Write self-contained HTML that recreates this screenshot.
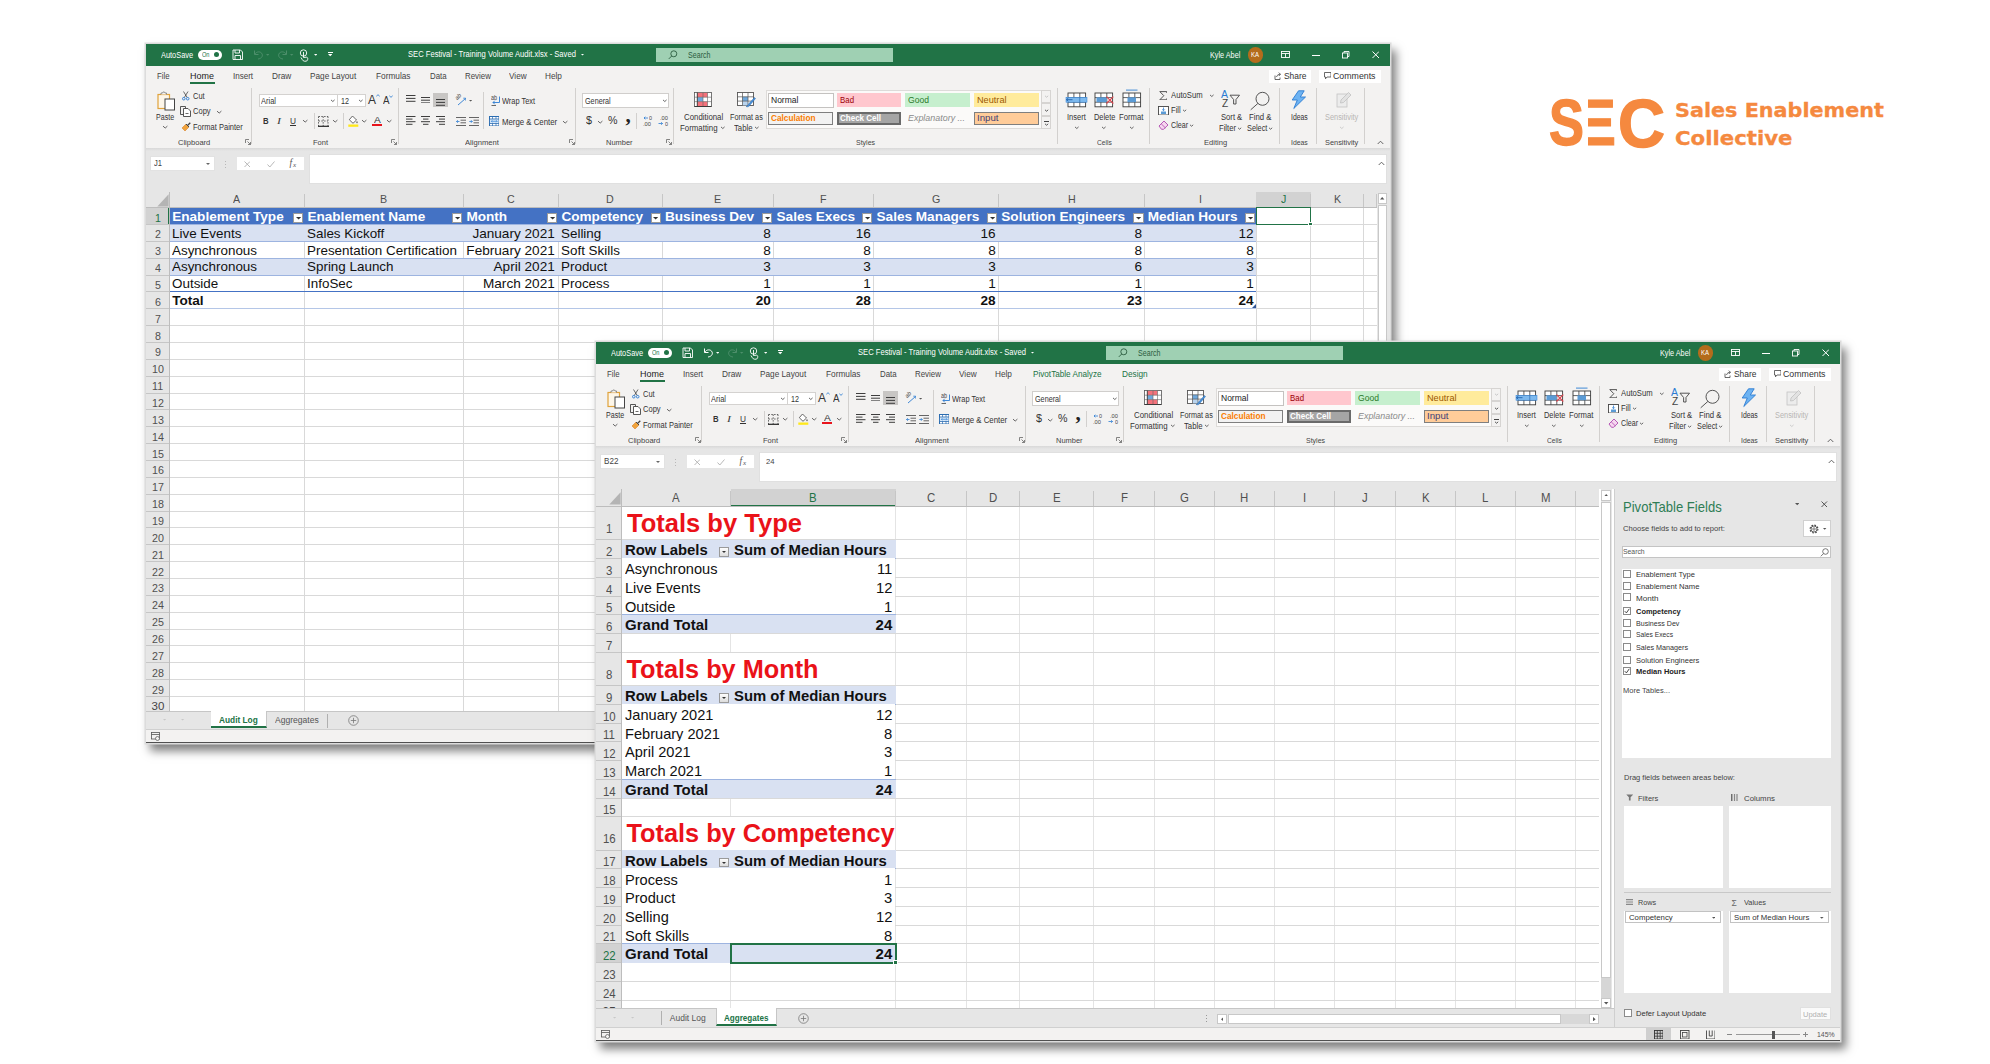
<!DOCTYPE html><html lang="en"><head><meta charset="utf-8"><title>SEC Festival - Training Volume Audit</title><style>
html,body{margin:0;padding:0;background:#fff;}
body{width:1990px;height:1064px;position:relative;overflow:hidden;font-family:"Liberation Sans",sans-serif;}
.a{position:absolute;display:block;}
.t{position:absolute;display:block;white-space:nowrap;transform-origin:0 50%;}
.win{position:absolute;width:1244px;height:699px;background:#e6e6e6;overflow:hidden;box-shadow:0 0 0 1.5px #dcdcdc,5px 7px 9px 1px rgba(0,0,0,0.5);}
</style></head><body>
<div class="win" style="left:146px;top:44px"><div class="a" style="left:0px;top:22px;width:1244px;height:81.5px;background:#f3f2f1;"></div>
<div class="a" style="left:0px;top:103.5px;width:1244px;height:3px;background:linear-gradient(#d8d8d8,#e6e6e6);"></div>
<div class="a" style="left:0px;top:0px;width:1244px;height:22px;background:#217346;"></div>
<span class="t" style="left:14.7px;top:5.5px;font-size:8.5px;line-height:10.2px;color:#fff;transform:scaleX(0.871);">AutoSave</span>
<div class="a" style="left:51.8px;top:5.6px;width:24.7px;height:10.4px;background:#fff;border-radius:5.2px;"></div>
<span class="t" style="left:55.5px;top:6.9px;font-size:6.5px;line-height:7.8px;color:#217346;transform:scaleX(0.865);">On</span>
<div class="a" style="left:68px;top:8.1px;width:5.4px;height:5.4px;background:#217346;border-radius:3px;"></div>
<svg class="a" style="left:85.8px;top:5px;" width="11.5" height="11.5" viewBox="0 0 11.5 11.5"><path d="M1 1H8.5L10.5 3V10.5H1Z M3 1V4H7.5V1 M3 10.5V6.5H8.5V10.5" fill="none" stroke="#fff" stroke-width="0.9"/></svg>
<svg class="a" style="left:106.5px;top:5px;" width="11" height="11" viewBox="0 0 11 11"><path d="M1.5 1.5V5.5H5.5 M1.8 5.2C3.5 2.2 8 2 9.2 5.2C10 8 7.5 9.8 5 10" fill="none" stroke="#4d8f6b" stroke-width="1"/></svg>
<svg class="a" style="left:119.8px;top:9.95px;" width="3.4" height="2.2" viewBox="0 0 3.4 2.2"><path d="M0 0 L3.4 0 L1.7 1.7 Z" fill="#4d8f6b"/></svg>
<svg class="a" style="left:130.5px;top:5px;" width="11" height="11" viewBox="0 0 11 11"><path d="M9.5 1.5V5.5H5.5 M9.2 5.2C7.5 2.2 3 2 1.8 5.2C1 8 3.5 9.8 6 10" fill="none" stroke="#4d8f6b" stroke-width="1"/></svg>
<svg class="a" style="left:144.3px;top:9.95px;" width="3.4" height="2.2" viewBox="0 0 3.4 2.2"><path d="M0 0 L3.4 0 L1.7 1.7 Z" fill="#4d8f6b"/></svg>
<svg class="a" style="left:153px;top:4.5px;" width="10" height="13" viewBox="0 0 10 13"><circle cx="4.5" cy="4" r="3.2" fill="none" stroke="#fff" stroke-width="0.9"/><path d="M4.5 3V8.5L7.5 8.2C9 8.4 9 10 8.3 11.5C7 12.8 4 12.5 3.2 10.5L2 8.5" fill="none" stroke="#fff" stroke-width="0.9"/></svg>
<svg class="a" style="left:167.7px;top:9.95px;" width="3.4" height="2.2" viewBox="0 0 3.4 2.2"><path d="M0 0 L3.4 0 L1.7 1.7 Z" fill="#fff"/></svg>
<div class="a" style="left:181.5px;top:8.2px;width:5px;height:1px;background:#fff;"></div>
<svg class="a" style="left:181.8px;top:9.9px;" width="4.4" height="2.7" viewBox="0 0 4.4 2.7"><path d="M0 0 L4.4 0 L2.2 2.2 Z" fill="#fff"/></svg>
<span class="t" style="left:262.4px;top:5.3px;font-size:8.5px;line-height:10.2px;color:#fff;transform:scaleX(0.895);">SEC Festival - Training Volume Audit.xlsx - Saved</span>
<svg class="a" style="left:435px;top:10.05px;" width="3" height="2" viewBox="0 0 3 2"><path d="M0 0 L3 0 L1.5 1.5 Z" fill="#fff"/></svg>
<div class="a" style="left:510.2px;top:3.9px;width:236.6px;height:14.4px;background:#9fd0b3;"></div>
<svg class="a" style="left:522px;top:6.2px;" width="9.5" height="9.5" viewBox="0 0 9.5 9.5"><circle cx="5.8" cy="3.8" r="3" fill="none" stroke="#2b5c40" stroke-width="0.9"/><path d="M3.7 6L0.8 8.9" stroke="#2b5c40" stroke-width="0.9"/></svg>
<span class="t" style="left:541.8px;top:6.1px;font-size:8.5px;line-height:10.2px;color:#2b5c40;transform:scaleX(0.835);">Search</span>
<span class="t" style="left:1063.7px;top:5.9px;font-size:8.5px;line-height:10.2px;color:#fff;transform:scaleX(0.855);">Kyle Abel</span>
<div class="a" style="left:1101.6px;top:3.3px;width:15.4px;height:15.4px;background:#b46c1c;border-radius:8px;"></div>
<span class="t" style="left:1105.3px;top:7.3px;font-size:6.5px;line-height:7.8px;color:#fff;transform:scaleX(0.923);">KA</span>
<svg class="a" style="left:1134.8px;top:7.3px;" width="9" height="7.5" viewBox="0 0 9 7.5"><rect x="0.5" y="0.5" width="8" height="6" fill="none" stroke="#fff" stroke-width="0.9"/><path d="M0.5 2.5H8.5M4.5 2.5V6.5" stroke="#fff" stroke-width="0.9"/></svg>
<div class="a" style="left:1165.5px;top:10.5px;width:8px;height:1px;background:#fff;"></div>
<svg class="a" style="left:1196px;top:7px;" width="8" height="8" viewBox="0 0 8 8"><rect x="0.5" y="2" width="5" height="5" fill="none" stroke="#fff" stroke-width="0.9"/><path d="M2 2V0.5H7V5.5H5.5" fill="none" stroke="#fff" stroke-width="0.9"/></svg>
<svg class="a" style="left:1225.5px;top:7.2px;" width="7.5" height="7.5" viewBox="0 0 7.5 7.5"><path d="M0.5 0.5L7 7M7 0.5L0.5 7" stroke="#fff" stroke-width="1"/></svg>
<span class="t" style="left:10.9px;top:26.3px;font-size:9.5px;line-height:11.4px;color:#444;transform:scaleX(0.817);">File</span>
<span class="t" style="left:44.3px;top:26.3px;font-size:9.5px;line-height:11.4px;color:#222;transform:scaleX(0.943);">Home</span>
<span class="t" style="left:86.5px;top:26.3px;font-size:9.5px;line-height:11.4px;color:#444;transform:scaleX(0.846);">Insert</span>
<span class="t" style="left:125.5px;top:26.3px;font-size:9.5px;line-height:11.4px;color:#444;transform:scaleX(0.871);">Draw</span>
<span class="t" style="left:164.4px;top:26.3px;font-size:9.5px;line-height:11.4px;color:#444;transform:scaleX(0.866);">Page Layout</span>
<span class="t" style="left:229.7px;top:26.3px;font-size:9.5px;line-height:11.4px;color:#444;transform:scaleX(0.871);">Formulas</span>
<span class="t" style="left:283.5px;top:26.3px;font-size:9.5px;line-height:11.4px;color:#444;transform:scaleX(0.827);">Data</span>
<span class="t" style="left:319.4px;top:26.3px;font-size:9.5px;line-height:11.4px;color:#444;transform:scaleX(0.831);">Review</span>
<span class="t" style="left:363.4px;top:26.3px;font-size:9.5px;line-height:11.4px;color:#444;transform:scaleX(0.862);">View</span>
<span class="t" style="left:399.3px;top:26.3px;font-size:9.5px;line-height:11.4px;color:#444;transform:scaleX(0.865);">Help</span>
<div class="a" style="left:44.2px;top:37.9px;width:24.8px;height:2px;background:#217346;"></div>
<div class="a" style="left:1123px;top:25.7px;width:42.4px;height:12.9px;background:#fff;"></div>
<svg class="a" style="left:1127.5px;top:28px;" width="7" height="8" viewBox="0 0 7 8"><path d="M1 3.5V7.5H6V5.5 M2.5 5C3 3 4.5 2.3 6.3 2.3 M4.8 0.6L6.5 2.3L4.8 4" fill="none" stroke="#444" stroke-width="0.8"/></svg>
<span class="t" style="left:1137.5px;top:26.8px;font-size:9px;line-height:10.8px;color:#333;transform:scaleX(0.937);">Share</span>
<div class="a" style="left:1172.7px;top:25.7px;width:62.7px;height:12.9px;background:#fff;"></div>
<svg class="a" style="left:1177.5px;top:28.3px;" width="7.5" height="7.5" viewBox="0 0 7.5 7.5"><path d="M0.5 0.5H7V5H3L1.5 6.8V5H0.5Z" fill="none" stroke="#444" stroke-width="0.8"/></svg>
<span class="t" style="left:1187px;top:26.8px;font-size:9px;line-height:10.8px;color:#333;transform:scaleX(0.977);">Comments</span>
<svg class="a" style="left:11px;top:47px;" width="19" height="20" viewBox="0 0 19 20"><rect x="1" y="3.5" width="11.5" height="14" fill="#fdf6e9" stroke="#e0a33c" stroke-width="1.2"/><path d="M4 3.5V2H5.5C5.5 0.6 8 0.6 8 2H9.5V3.5" fill="#f3f2f1" stroke="#777" stroke-width="0.8"/><rect x="8" y="8" width="9.5" height="11" fill="#fff" stroke="#444" stroke-width="1"/></svg>
<span class="t" style="left:9.9px;top:67.9px;font-size:8.5px;line-height:10.2px;color:#333;transform:scaleX(0.833);">Paste</span>
<svg class="a" style="left:15.8px;top:80.5px;" width="6.4" height="5.4" viewBox="0 0 6.4 5.4"><path d="M1 1.1 L3.2 3.08 L5.4 1.1" fill="none" stroke="#555" stroke-width="0.9"/></svg>
<svg class="a" style="left:36px;top:47.3px;" width="7.5" height="9.5" viewBox="0 0 7.5 9.5"><path d="M1.5 0.5L5.2 6.5M6 0.5L2.3 6.5" stroke="#444" stroke-width="0.8"/><circle cx="1.8" cy="7.7" r="1.3" fill="none" stroke="#2b7cd3" stroke-width="0.9"/><circle cx="5.7" cy="7.7" r="1.3" fill="none" stroke="#2b7cd3" stroke-width="0.9"/></svg>
<span class="t" style="left:46.8px;top:46.7px;font-size:8.5px;line-height:10.2px;color:#333;transform:scaleX(0.877);">Cut</span>
<svg class="a" style="left:34px;top:62px;" width="11" height="11" viewBox="0 0 11 11"><path d="M0.5 0.5H5.5V8.5H0.5Z" fill="#f3f2f1" stroke="#444" stroke-width="0.9"/><path d="M3.5 2.5H8L10.5 5V10.5H3.5Z" fill="#fff" stroke="#444" stroke-width="0.9"/><path d="M5.5 7.5H8.5" stroke="#444" stroke-width="0.8"/></svg>
<span class="t" style="left:46.8px;top:62.3px;font-size:8.5px;line-height:10.2px;color:#333;transform:scaleX(0.887);">Copy</span>
<svg class="a" style="left:69.8px;top:65.6px;" width="6.4" height="5.4" viewBox="0 0 6.4 5.4"><path d="M1 1.1 L3.2 3.08 L5.4 1.1" fill="none" stroke="#555" stroke-width="0.9"/></svg>
<svg class="a" style="left:35px;top:77.5px;" width="10" height="10" viewBox="0 0 10 10"><path d="M1 6L4 9L8 5L5 2Z" fill="#f0a33c" stroke="#d9822b" stroke-width="0.6"/><path d="M6.5 3.5L9.3 0.7" stroke="#444" stroke-width="1.3"/><path d="M5 2L8 5" stroke="#444" stroke-width="1"/></svg>
<span class="t" style="left:46.8px;top:77.6px;font-size:8.5px;line-height:10.2px;color:#333;transform:scaleX(0.886);">Format Painter</span>
<span class="t" style="left:31.7px;top:93.5px;font-size:8px;line-height:9.6px;color:#444;transform:scaleX(0.943);">Clipboard</span>
<svg class="a" style="left:99px;top:95.3px;" width="6" height="6" viewBox="0 0 6 6"><path d="M0.5 4V0.5H4M2.5 2.5L5.5 5.5M5.5 3V5.5H3" fill="none" stroke="#666" stroke-width="0.8"/></svg>
<div class="a" style="left:105px;top:44.3px;width:1px;height:55.7px;background:#d2d0ce;"></div>
<div class="a" style="left:112.6px;top:49.6px;width:79.3px;height:13.8px;background:#fff;border:1px solid #d4d2d0;box-sizing:border-box;"></div>
<span class="t" style="left:115px;top:51.7px;font-size:8.5px;line-height:10.2px;color:#333;transform:scaleX(0.882);">Arial</span>
<svg class="a" style="left:183.7px;top:55px;" width="5.6" height="4.6" viewBox="0 0 5.6 4.6"><path d="M1 0.9 L2.8 2.52 L4.6 0.9" fill="none" stroke="#555" stroke-width="0.9"/></svg>
<div class="a" style="left:190.9px;top:49.6px;width:28.7px;height:13.8px;background:#fff;border:1px solid #d4d2d0;box-sizing:border-box;"></div>
<span class="t" style="left:194.5px;top:51.7px;font-size:8.5px;line-height:10.2px;color:#333;transform:scaleX(0.846);">12</span>
<svg class="a" style="left:212.2px;top:55px;" width="5.6" height="4.6" viewBox="0 0 5.6 4.6"><path d="M1 0.9 L2.8 2.52 L4.6 0.9" fill="none" stroke="#555" stroke-width="0.9"/></svg>
<span class="t" style="left:222px;top:48.6px;font-size:12px;line-height:14.4px;color:#333;">A</span>
<svg class="a" style="left:229.5px;top:50px;" width="4" height="3" viewBox="0 0 4 3"><path d="M0.3 2.5L2 0.6L3.7 2.5" fill="none" stroke="#2b7cd3" stroke-width="0.8"/></svg>
<span class="t" style="left:237px;top:50.5px;font-size:10px;line-height:12px;color:#333;transform:scaleX(0.975);">A</span>
<svg class="a" style="left:243px;top:50.5px;" width="4" height="3" viewBox="0 0 4 3"><path d="M0.3 0.5L2 2.4L3.7 0.5" fill="none" stroke="#2b7cd3" stroke-width="0.8"/></svg>
<span class="t" style="left:116.6px;top:70.9px;font-size:9.5px;line-height:11.4px;color:#333;font-weight:bold;transform:scaleX(0.816);">B</span>
<span class="t" style="left:130.8px;top:72.2px;font-size:9px;line-height:10.8px;color:#333;font-style:italic;transform:scaleX(1.320);font-family:'Liberation Serif',serif;">I</span>
<span class="t" style="left:144.2px;top:70.6px;font-size:9.5px;line-height:11.4px;color:#333;transform:scaleX(0.875);text-decoration:underline;">U</span>
<svg class="a" style="left:156px;top:75.3px;" width="6.4" height="5.4" viewBox="0 0 6.4 5.4"><path d="M1 1.1 L3.2 3.08 L5.4 1.1" fill="none" stroke="#555" stroke-width="0.9"/></svg>
<div class="a" style="left:168px;top:69px;width:1px;height:16px;background:#d2d0ce;"></div>
<svg class="a" style="left:171.5px;top:71.5px;" width="11" height="11" viewBox="0 0 11 11"><path d="M0.5 0.5H10" stroke="#555" stroke-width="0.9" stroke-dasharray="1.5 1.3"/><path d="M0.5 0.5V10M5.2 0.5V10M10 0.5V10M0.5 5H10" stroke="#555" stroke-width="0.9" stroke-dasharray="1.5 1.3"/><path d="M0 10.3H11" stroke="#222" stroke-width="1.2"/></svg>
<svg class="a" style="left:185.9px;top:75.3px;" width="6.4" height="5.4" viewBox="0 0 6.4 5.4"><path d="M1 1.1 L3.2 3.08 L5.4 1.1" fill="none" stroke="#555" stroke-width="0.9"/></svg>
<div class="a" style="left:197px;top:69px;width:1px;height:16px;background:#d2d0ce;"></div>
<svg class="a" style="left:202.3px;top:70.8px;" width="11" height="12" viewBox="0 0 11 12"><path d="M4.5 1L8.5 5L5 8.3L1.3 4.7Z" fill="#fff" stroke="#444" stroke-width="0.8"/><path d="M9 6C9.8 7.2 9.8 8 9 8.3C8.2 8 8.2 7.2 9 6Z" fill="#444"/><rect x="0.3" y="9.5" width="10" height="2.3" fill="#ffe81a"/></svg>
<svg class="a" style="left:215.2px;top:75.3px;" width="6.4" height="5.4" viewBox="0 0 6.4 5.4"><path d="M1 1.1 L3.2 3.08 L5.4 1.1" fill="none" stroke="#555" stroke-width="0.9"/></svg>
<span class="t" style="left:227.9px;top:70.62px;font-size:9.3px;line-height:11.16px;color:#333;transform:scaleX(1.096);">A</span>
<div class="a" style="left:226.3px;top:80.1px;width:10px;height:2px;background:#e8141c;"></div>
<svg class="a" style="left:239.6px;top:75.3px;" width="6.4" height="5.4" viewBox="0 0 6.4 5.4"><path d="M1 1.1 L3.2 3.08 L5.4 1.1" fill="none" stroke="#555" stroke-width="0.9"/></svg>
<span class="t" style="left:166.7px;top:93.5px;font-size:8px;line-height:9.6px;color:#444;transform:scaleX(0.937);">Font</span>
<svg class="a" style="left:245px;top:95.3px;" width="6" height="6" viewBox="0 0 6 6"><path d="M0.5 4V0.5H4M2.5 2.5L5.5 5.5M5.5 3V5.5H3" fill="none" stroke="#666" stroke-width="0.8"/></svg>
<div class="a" style="left:252px;top:44.3px;width:1px;height:55.7px;background:#d2d0ce;"></div>
<div class="a" style="left:287px;top:48.8px;width:15px;height:14.7px;background:#c8c6c4;"></div>
<svg class="a" style="left:260.15px;top:50.9px;" width="9.5" height="6.8" viewBox="0 0 9.5 6.8"><path d="M0 0.5H9.5" stroke="#3b3b3b" stroke-width="1"/><path d="M0 3.4H9.5" stroke="#3b3b3b" stroke-width="1"/><path d="M0 6.3H9.5" stroke="#3b3b3b" stroke-width="1"/></svg>
<svg class="a" style="left:274.75px;top:52.8px;" width="9.5" height="6.4" viewBox="0 0 9.5 6.4"><path d="M0 0.5H9.5" stroke="#3b3b3b" stroke-width="1"/><path d="M0 3.2H9.5" stroke="#3b3b3b" stroke-width="1"/><path d="M0 5.9H9.5" stroke="#3b3b3b" stroke-width="1"/></svg>
<svg class="a" style="left:289.55px;top:54.8px;" width="9.5" height="6.8" viewBox="0 0 9.5 6.8"><path d="M0 0.5H9.5" stroke="#3b3b3b" stroke-width="1"/><path d="M0 3.4H9.5" stroke="#3b3b3b" stroke-width="1"/><path d="M0 6.3H9.5" stroke="#3b3b3b" stroke-width="1"/></svg>
<svg class="a" style="left:260.15px;top:72.4px;" width="9.5" height="8.8" viewBox="0 0 9.5 8.8"><path d="M0 0.5H9.5" stroke="#3b3b3b" stroke-width="1"/><path d="M0 3.1H6.5" stroke="#3b3b3b" stroke-width="1"/><path d="M0 5.7H9.5" stroke="#3b3b3b" stroke-width="1"/><path d="M0 8.3H6.5" stroke="#3b3b3b" stroke-width="1"/></svg>
<svg class="a" style="left:274.75px;top:72.4px;" width="9.5" height="8.8" viewBox="0 0 9.5 8.8"><path d="M0 0.5H9.5" stroke="#3b3b3b" stroke-width="1"/><path d="M2 3.1H7.5" stroke="#3b3b3b" stroke-width="1"/><path d="M0 5.7H9.5" stroke="#3b3b3b" stroke-width="1"/><path d="M2 8.3H7.5" stroke="#3b3b3b" stroke-width="1"/></svg>
<svg class="a" style="left:289.55px;top:72.4px;" width="9.5" height="8.8" viewBox="0 0 9.5 8.8"><path d="M0 0.5H9.5" stroke="#3b3b3b" stroke-width="1"/><path d="M3 3.1H9.5" stroke="#3b3b3b" stroke-width="1"/><path d="M0 5.7H9.5" stroke="#3b3b3b" stroke-width="1"/><path d="M3 8.3H9.5" stroke="#3b3b3b" stroke-width="1"/></svg>
<svg class="a" style="left:310px;top:51.5px;" width="10" height="10" viewBox="0 0 10 10"><path d="M2 9L9.5 2.5" stroke="#2b7cd3" stroke-width="0.9"/><path d="M7.3 2.2H9.7V4.6" fill="none" stroke="#2b7cd3" stroke-width="0.8"/></svg><span class="t" style="left:309.5px;top:51.3px;font-size:6.5px;line-height:7.8px;color:#444;transform:scaleX(0.830);transform:scaleX(0.8) rotate(-40deg);">ab</span>
<svg class="a" style="left:322.6px;top:56.4px;" width="3.2" height="2.1" viewBox="0 0 3.2 2.1"><path d="M0 0 L3.2 0 L1.6 1.6 Z" fill="#555"/></svg>
<div class="a" style="left:337px;top:48px;width:1px;height:37px;background:#d2d0ce;"></div>
<span class="t" style="left:344.8px;top:50.4px;font-size:6.5px;line-height:7.8px;color:#444;transform:scaleX(0.830);">ab</span>
<svg class="a" style="left:345px;top:52px;" width="9.5" height="10.5" viewBox="0 0 9.5 10.5"><path d="M8.5 0.5V6.5H2 M3.8 4.7L2 6.5L3.8 8.3" fill="none" stroke="#2b7cd3" stroke-width="0.9"/><path d="M0.5 9.5H5" stroke="#444" stroke-width="0.8"/></svg>
<span class="t" style="left:355.9px;top:52.1px;font-size:8.5px;line-height:10.2px;color:#333;transform:scaleX(0.872);">Wrap Text</span>
<svg class="a" style="left:309.6px;top:72.5px;" width="10" height="9" viewBox="0 0 10 9"><path d="M0 0.5H10M4.5 3.2H10M4.5 5.8H10M0 8.5H10" stroke="#555" stroke-width="0.9"/><path d="M3.5 4.5H0.5M1.8 3.2L0.5 4.5L1.8 5.8" fill="none" stroke="#2b7cd3" stroke-width="0.8"/></svg>
<svg class="a" style="left:323.4px;top:72.5px;" width="10" height="9" viewBox="0 0 10 9"><path d="M0 0.5H10M4.5 3.2H10M4.5 5.8H10M0 8.5H10" stroke="#555" stroke-width="0.9"/><path d="M0.3 4.5H3.3M2 3.2L3.3 4.5L2 5.8" fill="none" stroke="#2b7cd3" stroke-width="0.8"/></svg>
<svg class="a" style="left:342.8px;top:71.7px;" width="10.5" height="10.5" viewBox="0 0 10.5 10.5"><rect x="0.5" y="0.5" width="9.5" height="9.5" fill="#fff" stroke="#2b6cb0" stroke-width="1"/><rect x="0.5" y="3" width="9.5" height="4.4" fill="#d6e8f9" stroke="#2b6cb0" stroke-width="0.8"/><path d="M3.5 0.5V3M7 0.5V3M3.5 7.4V10M7 7.4V10" stroke="#2b6cb0" stroke-width="0.7"/><path d="M2.3 5.3H8.2M3.3 4.3L2.3 5.3L3.3 6.3M7.2 4.3L8.2 5.3L7.2 6.3" fill="none" stroke="#2b7cd3" stroke-width="0.7"/></svg>
<span class="t" style="left:355.9px;top:72.7px;font-size:8.5px;line-height:10.2px;color:#333;transform:scaleX(0.920);">Merge &amp; Center</span>
<svg class="a" style="left:416.2px;top:75.6px;" width="6.4" height="5.4" viewBox="0 0 6.4 5.4"><path d="M1 1.1 L3.2 3.08 L5.4 1.1" fill="none" stroke="#555" stroke-width="0.9"/></svg>
<span class="t" style="left:319.4px;top:93.5px;font-size:8px;line-height:9.6px;color:#444;transform:scaleX(0.953);">Alignment</span>
<svg class="a" style="left:423px;top:95.3px;" width="6" height="6" viewBox="0 0 6 6"><path d="M0.5 4V0.5H4M2.5 2.5L5.5 5.5M5.5 3V5.5H3" fill="none" stroke="#666" stroke-width="0.8"/></svg>
<div class="a" style="left:429px;top:44.3px;width:1px;height:55.7px;background:#d2d0ce;"></div>
<div class="a" style="left:436.3px;top:49px;width:86.7px;height:15.3px;background:#fff;border:1px solid #d0cecc;box-sizing:border-box;"></div>
<span class="t" style="left:438.5px;top:51.7px;font-size:8.5px;line-height:10.2px;color:#333;transform:scaleX(0.850);">General</span>
<svg class="a" style="left:515.5px;top:55.2px;" width="5.6" height="4.6" viewBox="0 0 5.6 4.6"><path d="M1 0.9 L2.8 2.52 L4.6 0.9" fill="none" stroke="#555" stroke-width="0.9"/></svg>
<span class="t" style="left:439.7px;top:70.1px;font-size:11.5px;line-height:13.8px;color:#333;transform:scaleX(0.938);">$</span>
<svg class="a" style="left:450.8px;top:75.6px;" width="6.4" height="5.4" viewBox="0 0 6.4 5.4"><path d="M1 1.1 L3.2 3.08 L5.4 1.1" fill="none" stroke="#555" stroke-width="0.9"/></svg>
<span class="t" style="left:462.05px;top:70.1px;font-size:11.5px;line-height:13.8px;color:#333;transform:scaleX(0.929);">%</span>
<span class="t" style="left:479.38px;top:58.6px;font-size:21px;line-height:25.2px;color:#222;font-weight:bold;font-family:'Liberation Serif',serif;">,</span>
<div class="a" style="left:490px;top:69px;width:1px;height:16px;background:#d2d0ce;"></div>
<svg class="a" style="left:496.5px;top:71.5px;" width="11" height="11" viewBox="0 0 11 11"><path d="M5 2H1M2.3 0.7L1 2L2.3 3.3" fill="none" stroke="#2b7cd3" stroke-width="0.8"/></svg><span class="t" style="left:502.5px;top:71.2px;font-size:5.5px;line-height:6.6px;color:#444;transform:scaleX(0.981);">0</span><span class="t" style="left:497px;top:76.7px;font-size:5.5px;line-height:6.6px;color:#444;transform:scaleX(1.046);">.00</span>
<svg class="a" style="left:511.5px;top:71.5px;" width="11" height="11" viewBox="0 0 11 11"><path d="M0.5 7.5H4.5M3.2 6.2L4.5 7.5L3.2 8.8" fill="none" stroke="#2b7cd3" stroke-width="0.8"/></svg><span class="t" style="left:514px;top:71.2px;font-size:5.5px;line-height:6.6px;color:#444;transform:scaleX(1.046);">.00</span><span class="t" style="left:518.5px;top:76.7px;font-size:5.5px;line-height:6.6px;color:#444;transform:scaleX(0.981);">0</span>
<span class="t" style="left:460.4px;top:93.5px;font-size:8px;line-height:9.6px;color:#444;transform:scaleX(0.935);">Number</span>
<svg class="a" style="left:520px;top:95.3px;" width="6" height="6" viewBox="0 0 6 6"><path d="M0.5 4V0.5H4M2.5 2.5L5.5 5.5M5.5 3V5.5H3" fill="none" stroke="#666" stroke-width="0.8"/></svg>
<div class="a" style="left:527px;top:44.3px;width:1px;height:55.7px;background:#d2d0ce;"></div>
<svg class="a" style="left:547.9px;top:48.2px;" width="18.5" height="15.5" viewBox="0 0 18.5 15.5"><rect x="0.5" y="0.5" width="17" height="14" fill="#fff" stroke="#555" stroke-width="0.8"/><rect x="3.3" y="0.9" width="10.2" height="4.3" fill="#f4727b"/><rect x="3.3" y="5.2" width="5.7" height="4.4" fill="#6fa8dc"/><rect x="3.3" y="9.6" width="10.2" height="4.5" fill="#f4727b"/><path d="M0.5 5.2H17.5M0.5 9.6H17.5M9 0.5V14.5M13.5 0.5V14.5" stroke="#666" stroke-width="0.6"/><path d="M3.3 0.5V14.5M0.5 14.5H17.5" stroke="#333" stroke-width="0.9"/></svg>
<span class="t" style="left:537.6px;top:68.2px;font-size:8.5px;line-height:10.2px;color:#333;transform:scaleX(0.922);">Conditional</span>
<span class="t" style="left:534.4px;top:78.5px;font-size:8.5px;line-height:10.2px;color:#333;transform:scaleX(0.926);">Formatting</span>
<svg class="a" style="left:574.2px;top:82.4px;" width="5.6" height="4.6" viewBox="0 0 5.6 4.6"><path d="M1 0.9 L2.8 2.52 L4.6 0.9" fill="none" stroke="#555" stroke-width="0.9"/></svg>
<svg class="a" style="left:591.3px;top:48.3px;" width="19" height="16" viewBox="0 0 19 16"><rect x="0.5" y="0.5" width="16" height="13" fill="#fff" stroke="#555" stroke-width="0.9"/><rect x="5.5" y="4.8" width="5.5" height="4.3" fill="#6fa8dc"/><rect x="5.5" y="9.1" width="5.5" height="4.3" fill="#b9d4ee"/><path d="M0.5 4.8H16.5M0.5 9.1H16.5M5.5 0.5V13.5M11 0.5V13.5" stroke="#555" stroke-width="0.7"/><path d="M9 14.5C10.5 14.5 11 13 12 11.5L17.5 5.5L18.5 6.5L13.5 12.5C12.5 14 11.5 15.5 9 14.5Z" fill="#4a90d9" stroke="#2b6cb0" stroke-width="0.5"/></svg>
<span class="t" style="left:583.6px;top:68.2px;font-size:8.5px;line-height:10.2px;color:#333;transform:scaleX(0.857);">Format as</span>
<span class="t" style="left:587.5px;top:78.5px;font-size:8.5px;line-height:10.2px;color:#333;transform:scaleX(0.910);">Table</span>
<svg class="a" style="left:607.7px;top:82.4px;" width="5.6" height="4.6" viewBox="0 0 5.6 4.6"><path d="M1 0.9 L2.8 2.52 L4.6 0.9" fill="none" stroke="#555" stroke-width="0.9"/></svg>
<div class="a" style="left:619.8px;top:45.7px;width:285.2px;height:39.6px;background:#fbfaf9;border:1px solid #dddbd9;box-sizing:border-box;"></div>
<div class="a" style="left:621.5px;top:48.5px;width:66.3px;height:15.4px;background:#fff;box-sizing:border-box;border:1.5px solid #c4c2c0;"></div>
<span class="t" style="left:625px;top:50.9px;font-size:8.5px;line-height:10.2px;color:#222;">Normal</span>
<div class="a" style="left:691.2px;top:49px;width:64.3px;height:14.4px;background:#ffc7ce;"></div>
<span class="t" style="left:694px;top:50.9px;font-size:8.5px;line-height:10.2px;color:#9c0006;transform:scaleX(0.926);">Bad</span>
<div class="a" style="left:759.4px;top:49px;width:64.3px;height:14.4px;background:#c6efce;"></div>
<span class="t" style="left:762px;top:50.9px;font-size:8.5px;line-height:10.2px;color:#2a7a2a;transform:scaleX(1.010);">Good</span>
<div class="a" style="left:827.9px;top:49px;width:65.3px;height:14.4px;background:#ffeb9c;"></div>
<span class="t" style="left:831px;top:50.9px;font-size:8.5px;line-height:10.2px;color:#9c5700;transform:scaleX(1.077);">Neutral</span>
<div class="a" style="left:622px;top:67.9px;width:65.3px;height:13.6px;background:#f2f2f2;box-sizing:border-box;border:1px solid #7f7f7f;"></div>
<span class="t" style="left:625px;top:69.2px;font-size:8.5px;line-height:10.2px;color:#fa7d00;font-weight:bold;transform:scaleX(0.971);">Calculation</span>
<div class="a" style="left:691.2px;top:67.9px;width:64.3px;height:13.6px;background:#a5a5a5;box-sizing:border-box;border:2px solid #6a6a6a;"></div>
<span class="t" style="left:694px;top:69.2px;font-size:8.5px;line-height:10.2px;color:#fff;font-weight:bold;transform:scaleX(0.943);">Check Cell</span>
<span class="t" style="left:762px;top:69.2px;font-size:8.5px;line-height:10.2px;color:#8a8a8a;font-style:italic;transform:scaleX(1.049);">Explanatory ...</span>
<div class="a" style="left:827.9px;top:67.9px;width:65.3px;height:13.6px;background:#ffcc99;box-sizing:border-box;border:1px solid #7f7f7f;"></div>
<span class="t" style="left:831px;top:69.2px;font-size:8.5px;line-height:10.2px;color:#3f3f76;transform:scaleX(1.137);">Input</span>
<div class="a" style="left:895.4px;top:45.7px;width:9.6px;height:13.2px;background:#f3f2f1;box-sizing:border-box;border:1px solid #d6d4d2;"></div>
<div class="a" style="left:895.4px;top:58.9px;width:9.6px;height:13.2px;background:#f3f2f1;box-sizing:border-box;border:1px solid #d6d4d2;"></div>
<div class="a" style="left:895.4px;top:72.1px;width:9.6px;height:13.2px;background:#f3f2f1;box-sizing:border-box;border:1px solid #d6d4d2;"></div>
<svg class="a" style="left:897.6px;top:51px;" width="5.2" height="4.2" viewBox="0 0 5.2 4.2"><path d="M1 0.8 L2.6 2.24 L4.2 0.8" fill="none" stroke="#c0c0c0" stroke-width="0.9"/></svg>
<svg class="a" style="left:897.6px;top:64.7px;" width="5.2" height="4.2" viewBox="0 0 5.2 4.2"><path d="M1 0.8 L2.6 2.24 L4.2 0.8" fill="none" stroke="#444" stroke-width="0.9"/></svg>
<div class="a" style="left:898px;top:77.3px;width:4.6px;height:0.8px;background:#444;"></div>
<svg class="a" style="left:897.6px;top:79px;" width="5.2" height="4.2" viewBox="0 0 5.2 4.2"><path d="M1 0.8 L2.6 2.24 L4.2 0.8" fill="none" stroke="#444" stroke-width="0.9"/></svg>
<span class="t" style="left:709.8px;top:93.5px;font-size:8px;line-height:9.6px;color:#444;transform:scaleX(0.872);">Styles</span>
<div class="a" style="left:911px;top:44.3px;width:1px;height:55.7px;background:#d2d0ce;"></div>
<svg class="a" style="left:919.2px;top:45.1px;" width="24" height="18.5" viewBox="0 0 24 18.5"><g transform="translate(2.5,3.5)"><rect x="0.5" y="0.5" width="17.6" height="13.8" fill="#fff" stroke="#3b3b3b" stroke-width="0.9"/><path d="M0.5 5.1H18.1M0.5 9.7H18.1M6.4 0.5V14.3M12.3 0.5V14.3" stroke="#3b3b3b" stroke-width="0.8"/><rect x="-1.5" y="4.8" width="21" height="4.9" fill="#7db9ee" stroke="#2b7cd3" stroke-width="0.5"/><path d="M12.3 4.8V9.7" stroke="#2b6cb0" stroke-width="0.7"/><path d="M5 7.2H-1M0.8 5.6L-1 7.2L0.8 8.8" fill="none" stroke="#1f62ad" stroke-width="0.9"/></g></svg>
<span class="t" style="left:921px;top:68.4px;font-size:8.5px;line-height:10.2px;color:#333;transform:scaleX(0.884);">Insert</span>
<svg class="a" style="left:927.7px;top:81.5px;" width="5.6" height="4.6" viewBox="0 0 5.6 4.6"><path d="M1 0.9 L2.8 2.52 L4.6 0.9" fill="none" stroke="#555" stroke-width="0.9"/></svg>
<svg class="a" style="left:946.4px;top:45.1px;" width="24" height="18.5" viewBox="0 0 24 18.5"><g transform="translate(2.5,3.5)"><rect x="0.5" y="0.5" width="17.6" height="13.8" fill="#fff" stroke="#3b3b3b" stroke-width="0.9"/><path d="M0.5 5.1H18.1M0.5 9.7H18.1M6.4 0.5V14.3M12.3 0.5V14.3" stroke="#3b3b3b" stroke-width="0.8"/><rect x="2" y="4.8" width="10" height="4.9" fill="#5b9bd5"/><path d="M12 4.2L18.8 11M18.8 4.2L12 11" stroke="#e0454f" stroke-width="1.1"/></g></svg>
<span class="t" style="left:947.5px;top:68.4px;font-size:8.5px;line-height:10.2px;color:#333;transform:scaleX(0.867);">Delete</span>
<svg class="a" style="left:955.2px;top:81.5px;" width="5.6" height="4.6" viewBox="0 0 5.6 4.6"><path d="M1 0.9 L2.8 2.52 L4.6 0.9" fill="none" stroke="#555" stroke-width="0.9"/></svg>
<svg class="a" style="left:973.6px;top:45.1px;" width="24" height="18.5" viewBox="0 0 24 18.5"><g transform="translate(2.5,3.5)"><rect x="0.5" y="0.5" width="17.6" height="13.8" fill="#fff" stroke="#3b3b3b" stroke-width="0.9"/><path d="M0.5 5.1H18.1M0.5 9.7H18.1M6.4 0.5V14.3M12.3 0.5V14.3" stroke="#3b3b3b" stroke-width="0.8"/><path d="M3.5 -2.4H15" stroke="#2b7cd3" stroke-width="0.9"/><rect x="5" y="4.8" width="8.5" height="4.9" fill="#5b9bd5"/></g></svg>
<span class="t" style="left:973.3px;top:68.4px;font-size:8.5px;line-height:10.2px;color:#333;transform:scaleX(0.906);">Format</span>
<svg class="a" style="left:982.6px;top:81.5px;" width="5.6" height="4.6" viewBox="0 0 5.6 4.6"><path d="M1 0.9 L2.8 2.52 L4.6 0.9" fill="none" stroke="#555" stroke-width="0.9"/></svg>
<span class="t" style="left:950.8px;top:93.5px;font-size:8px;line-height:9.6px;color:#444;transform:scaleX(0.832);">Cells</span>
<div class="a" style="left:1003px;top:44.3px;width:1px;height:55.7px;background:#d2d0ce;"></div>
<svg class="a" style="left:1012.8px;top:46.5px;" width="8.5" height="9.5" viewBox="0 0 8.5 9.5"><path d="M7.8 2V0.6H0.8L4.8 4.7L0.8 8.8H7.8V7.4" fill="none" stroke="#444" stroke-width="0.9"/></svg>
<span class="t" style="left:1024.7px;top:45.9px;font-size:8.5px;line-height:10.2px;color:#333;transform:scaleX(0.904);">AutoSum</span>
<svg class="a" style="left:1062.5px;top:49.7px;" width="5.6" height="4.6" viewBox="0 0 5.6 4.6"><path d="M1 0.9 L2.8 2.52 L4.6 0.9" fill="none" stroke="#555" stroke-width="0.9"/></svg>
<svg class="a" style="left:1012px;top:61.5px;" width="11" height="9.5" viewBox="0 0 11 9.5"><rect x="0.5" y="0.5" width="10" height="8.5" fill="#fff" stroke="#444" stroke-width="0.9"/><rect x="3" y="5.5" width="5" height="2.5" fill="#5b9bd5"/><path d="M5.5 1.5V4.5M4.2 3.4L5.5 4.7L6.8 3.4" fill="none" stroke="#2b7cd3" stroke-width="0.8"/></svg>
<span class="t" style="left:1024.7px;top:61.2px;font-size:8.5px;line-height:10.2px;color:#333;transform:scaleX(0.893);">Fill</span>
<svg class="a" style="left:1036px;top:65.4px;" width="5.2" height="4.2" viewBox="0 0 5.2 4.2"><path d="M1 0.8 L2.6 2.24 L4.2 0.8" fill="none" stroke="#555" stroke-width="0.9"/></svg>
<svg class="a" style="left:1012px;top:76px;" width="11" height="10" viewBox="0 0 11 10"><path d="M1 6L6 1L10 5L5.5 9.3H3.5Z" fill="#f6d7ef" stroke="#b04ab0" stroke-width="0.9"/><path d="M3.2 3.8L7.5 8" stroke="#b04ab0" stroke-width="0.8"/></svg>
<span class="t" style="left:1024.7px;top:75.9px;font-size:8.5px;line-height:10.2px;color:#333;transform:scaleX(0.837);">Clear</span>
<svg class="a" style="left:1043.4px;top:80.1px;" width="5.2" height="4.2" viewBox="0 0 5.2 4.2"><path d="M1 0.8 L2.6 2.24 L4.2 0.8" fill="none" stroke="#555" stroke-width="0.9"/></svg>
<span class="t" style="left:1075.3px;top:45.2px;font-size:10px;line-height:12px;color:#2b7cd3;transform:scaleX(1.049);">A</span><span class="t" style="left:1075.8px;top:54px;font-size:10px;line-height:12px;color:#444;transform:scaleX(1.015);">Z</span>
<svg class="a" style="left:1083px;top:50px;" width="12" height="12" viewBox="0 0 12 12"><path d="M1 1.2H10.5L7 5.5V10H4.6V5.5Z" fill="#f3f2f1" stroke="#444" stroke-width="0.9"/></svg>
<span class="t" style="left:1074.6px;top:68.2px;font-size:8.5px;line-height:10.2px;color:#333;transform:scaleX(0.898);">Sort &amp;</span>
<span class="t" style="left:1073px;top:78.5px;font-size:8.5px;line-height:10.2px;color:#333;transform:scaleX(0.900);">Filter</span>
<svg class="a" style="left:1091.4px;top:82.6px;" width="5.2" height="4.2" viewBox="0 0 5.2 4.2"><path d="M1 0.8 L2.6 2.24 L4.2 0.8" fill="none" stroke="#555" stroke-width="0.9"/></svg>
<svg class="a" style="left:1103.5px;top:46.5px;" width="22" height="20" viewBox="0 0 22 20"><circle cx="12.5" cy="7.8" r="6.5" fill="none" stroke="#444" stroke-width="0.9"/><path d="M7.9 12.4L0.7 18.8" stroke="#444" stroke-width="0.9"/></svg>
<span class="t" style="left:1102.9px;top:68.2px;font-size:8.5px;line-height:10.2px;color:#333;transform:scaleX(0.916);">Find &amp;</span>
<span class="t" style="left:1100.6px;top:78.5px;font-size:8.5px;line-height:10.2px;color:#333;transform:scaleX(0.864);">Select</span>
<svg class="a" style="left:1122.4px;top:82.6px;" width="5.2" height="4.2" viewBox="0 0 5.2 4.2"><path d="M1 0.8 L2.6 2.24 L4.2 0.8" fill="none" stroke="#555" stroke-width="0.9"/></svg>
<span class="t" style="left:1057.9px;top:93.5px;font-size:8px;line-height:9.6px;color:#444;transform:scaleX(0.944);">Editing</span>
<div class="a" style="left:1133px;top:44.3px;width:1px;height:55.7px;background:#d2d0ce;"></div>
<svg class="a" style="left:1145px;top:45.5px;" width="16" height="20" viewBox="0 0 16 20"><path d="M7.5 0.8L13.2 0.8L9.3 7H14.5L2.8 18.5L6.3 10H1.2Z" fill="#6db3f2" stroke="#2b7cd3" stroke-width="0.9"/></svg>
<span class="t" style="left:1144.7px;top:68.2px;font-size:8.5px;line-height:10.2px;color:#333;transform:scaleX(0.808);">Ideas</span>
<span class="t" style="left:1144.7px;top:93.5px;font-size:8px;line-height:9.6px;color:#444;transform:scaleX(0.858);">Ideas</span>
<div class="a" style="left:1170px;top:44.3px;width:1px;height:55.7px;background:#d2d0ce;"></div>
<svg class="a" style="left:1189.5px;top:46.5px;" width="16" height="17" viewBox="0 0 16 17"><rect x="1" y="3" width="10" height="13" fill="#ececec" stroke="#c4c4c4" stroke-width="0.8"/><path d="M5 9L12.5 1.5L15 4L7.5 11.5L4.5 12Z" fill="#e2e2e2" stroke="#c0c0c0" stroke-width="0.8"/></svg>
<span class="t" style="left:1179px;top:68.2px;font-size:8.5px;line-height:10.2px;color:#b8b6b4;transform:scaleX(0.870);">Sensitivity</span>
<svg class="a" style="left:1192.7px;top:82.2px;" width="5.6" height="4.6" viewBox="0 0 5.6 4.6"><path d="M1 0.9 L2.8 2.52 L4.6 0.9" fill="none" stroke="#c8c8c8" stroke-width="0.9"/></svg>
<span class="t" style="left:1179px;top:93.5px;font-size:8px;line-height:9.6px;color:#444;transform:scaleX(0.925);">Sensitivity</span>
<div class="a" style="left:1218px;top:44.3px;width:1px;height:55.7px;background:#d2d0ce;"></div>
<svg class="a" style="left:1231.2px;top:96.3px;" width="7" height="5" viewBox="0 0 7 5"><path d="M0.7 4L3.5 1.2L6.3 4" fill="none" stroke="#555" stroke-width="0.9"/></svg>
<div class="a" style="left:3.8px;top:111.8px;width:64.8px;height:15.3px;background:#fff;box-sizing:border-box;border:1px solid #e2e2e2;"></div>
<span class="t" style="left:7.6px;top:114.4px;font-size:9px;line-height:10.8px;color:#444;transform:scaleX(0.842);">J1</span>
<svg class="a" style="left:59.5px;top:118.8px;" width="4" height="2.5" viewBox="0 0 4 2.5"><path d="M0 0 L4 0 L2 2 Z" fill="#666"/></svg>
<div class="a" style="left:79.3px;top:116.5px;width:1px;height:1px;background:#b8b8b8;"></div>
<div class="a" style="left:79.3px;top:119.5px;width:1px;height:1px;background:#b8b8b8;"></div>
<div class="a" style="left:79.3px;top:122.5px;width:1px;height:1px;background:#b8b8b8;"></div>
<div class="a" style="left:89.8px;top:111.8px;width:69.1px;height:15.3px;background:#fff;box-sizing:border-box;border:1px solid #e6e6e6;"></div>
<svg class="a" style="left:97.5px;top:116.5px;" width="6.5" height="6.5" viewBox="0 0 6.5 6.5"><path d="M0.5 0.5L6 6M6 0.5L0.5 6" stroke="#b0b0b0" stroke-width="0.9"/></svg>
<svg class="a" style="left:120.5px;top:116.5px;" width="8" height="6.5" viewBox="0 0 8 6.5"><path d="M0.5 3.5L2.8 6L7.5 0.5" fill="none" stroke="#b0b0b0" stroke-width="0.9"/></svg>
<span class="t" style="left:143.5px;top:114.1px;font-size:9.5px;line-height:11.4px;color:#555;font-style:italic;font-family:'Liberation Serif',serif;">f</span><span class="t" style="left:147px;top:116.8px;font-size:7px;line-height:8.4px;color:#555;font-style:italic;font-family:'Liberation Serif',serif;">x</span>
<div class="a" style="left:162.7px;top:110px;width:1077.9px;height:30.1px;background:#fff;box-sizing:border-box;border:1px solid #e0e0e0;"></div>
<svg class="a" style="left:1231.5px;top:116.5px;" width="7" height="5" viewBox="0 0 7 5"><path d="M0.7 4L3.5 1.2L6.3 4" fill="none" stroke="#555" stroke-width="0.9"/></svg>
<div class="a" style="left:0px;top:148px;width:1241px;height:519.4px;background:#fff;"></div>
<div class="a" style="left:157.9px;top:163.6px;width:1px;height:503.8px;background:#d9d9d9;"></div>
<div class="a" style="left:316.9px;top:163.6px;width:1px;height:503.8px;background:#d9d9d9;"></div>
<div class="a" style="left:411.9px;top:163.6px;width:1px;height:503.8px;background:#d9d9d9;"></div>
<div class="a" style="left:515.5px;top:163.6px;width:1px;height:503.8px;background:#d9d9d9;"></div>
<div class="a" style="left:627px;top:163.6px;width:1px;height:503.8px;background:#d9d9d9;"></div>
<div class="a" style="left:727px;top:163.6px;width:1px;height:503.8px;background:#d9d9d9;"></div>
<div class="a" style="left:851.8px;top:163.6px;width:1px;height:503.8px;background:#d9d9d9;"></div>
<div class="a" style="left:998.2px;top:163.6px;width:1px;height:503.8px;background:#d9d9d9;"></div>
<div class="a" style="left:1109.8px;top:163.6px;width:1px;height:503.8px;background:#d9d9d9;"></div>
<div class="a" style="left:1164.1px;top:163.6px;width:1px;height:503.8px;background:#d9d9d9;"></div>
<div class="a" style="left:1217.2px;top:163.6px;width:1px;height:503.8px;background:#d9d9d9;"></div>
<div class="a" style="left:23.2px;top:179.96px;width:1207.4px;height:1px;background:#d9d9d9;"></div>
<div class="a" style="left:23.2px;top:196.82px;width:1207.4px;height:1px;background:#d9d9d9;"></div>
<div class="a" style="left:23.2px;top:213.68px;width:1207.4px;height:1px;background:#d9d9d9;"></div>
<div class="a" style="left:23.2px;top:230.54px;width:1207.4px;height:1px;background:#d9d9d9;"></div>
<div class="a" style="left:23.2px;top:247.4px;width:1207.4px;height:1px;background:#d9d9d9;"></div>
<div class="a" style="left:23.2px;top:264.26px;width:1207.4px;height:1px;background:#d9d9d9;"></div>
<div class="a" style="left:23.2px;top:281.12px;width:1207.4px;height:1px;background:#d9d9d9;"></div>
<div class="a" style="left:23.2px;top:297.98px;width:1207.4px;height:1px;background:#d9d9d9;"></div>
<div class="a" style="left:23.2px;top:314.84px;width:1207.4px;height:1px;background:#d9d9d9;"></div>
<div class="a" style="left:23.2px;top:331.7px;width:1207.4px;height:1px;background:#d9d9d9;"></div>
<div class="a" style="left:23.2px;top:348.56px;width:1207.4px;height:1px;background:#d9d9d9;"></div>
<div class="a" style="left:23.2px;top:365.42px;width:1207.4px;height:1px;background:#d9d9d9;"></div>
<div class="a" style="left:23.2px;top:382.28px;width:1207.4px;height:1px;background:#d9d9d9;"></div>
<div class="a" style="left:23.2px;top:399.14px;width:1207.4px;height:1px;background:#d9d9d9;"></div>
<div class="a" style="left:23.2px;top:416px;width:1207.4px;height:1px;background:#d9d9d9;"></div>
<div class="a" style="left:23.2px;top:432.86px;width:1207.4px;height:1px;background:#d9d9d9;"></div>
<div class="a" style="left:23.2px;top:449.72px;width:1207.4px;height:1px;background:#d9d9d9;"></div>
<div class="a" style="left:23.2px;top:466.58px;width:1207.4px;height:1px;background:#d9d9d9;"></div>
<div class="a" style="left:23.2px;top:483.44px;width:1207.4px;height:1px;background:#d9d9d9;"></div>
<div class="a" style="left:23.2px;top:500.3px;width:1207.4px;height:1px;background:#d9d9d9;"></div>
<div class="a" style="left:23.2px;top:517.16px;width:1207.4px;height:1px;background:#d9d9d9;"></div>
<div class="a" style="left:23.2px;top:534.02px;width:1207.4px;height:1px;background:#d9d9d9;"></div>
<div class="a" style="left:23.2px;top:550.88px;width:1207.4px;height:1px;background:#d9d9d9;"></div>
<div class="a" style="left:23.2px;top:567.74px;width:1207.4px;height:1px;background:#d9d9d9;"></div>
<div class="a" style="left:23.2px;top:584.6px;width:1207.4px;height:1px;background:#d9d9d9;"></div>
<div class="a" style="left:23.2px;top:601.46px;width:1207.4px;height:1px;background:#d9d9d9;"></div>
<div class="a" style="left:23.2px;top:618.32px;width:1207.4px;height:1px;background:#d9d9d9;"></div>
<div class="a" style="left:23.2px;top:635.18px;width:1207.4px;height:1px;background:#d9d9d9;"></div>
<div class="a" style="left:23.2px;top:652.04px;width:1207.4px;height:1px;background:#d9d9d9;"></div>
<div class="a" style="left:23.2px;top:163.6px;width:1087.1px;height:16.86px;background:#4472c4;"></div>
<span class="t" style="left:26.2px;top:164.77px;font-size:13.6px;line-height:16.32px;color:#fff;font-weight:bold;">Enablement Type</span>
<div class="a" style="left:147.1px;top:168.6px;width:10.3px;height:10.8px;background:#fff;border:1px solid #9a9a9a;box-sizing:border-box;"></div>
<svg class="a" style="left:149.7px;top:172.9px;" width="5.2" height="3.1" viewBox="0 0 5.2 3.1"><path d="M0 0 L5.2 0 L2.6 2.6 Z" fill="#333"/></svg>
<span class="t" style="left:161.4px;top:164.77px;font-size:13.6px;line-height:16.32px;color:#fff;font-weight:bold;">Enablement Name</span>
<div class="a" style="left:306.1px;top:168.6px;width:10.3px;height:10.8px;background:#fff;border:1px solid #9a9a9a;box-sizing:border-box;"></div>
<svg class="a" style="left:308.7px;top:172.9px;" width="5.2" height="3.1" viewBox="0 0 5.2 3.1"><path d="M0 0 L5.2 0 L2.6 2.6 Z" fill="#333"/></svg>
<span class="t" style="left:320.4px;top:164.77px;font-size:13.6px;line-height:16.32px;color:#fff;font-weight:bold;">Month</span>
<div class="a" style="left:401.1px;top:168.6px;width:10.3px;height:10.8px;background:#fff;border:1px solid #9a9a9a;box-sizing:border-box;"></div>
<svg class="a" style="left:403.7px;top:172.9px;" width="5.2" height="3.1" viewBox="0 0 5.2 3.1"><path d="M0 0 L5.2 0 L2.6 2.6 Z" fill="#333"/></svg>
<span class="t" style="left:415.4px;top:164.77px;font-size:13.6px;line-height:16.32px;color:#fff;font-weight:bold;">Competency</span>
<div class="a" style="left:504.7px;top:168.6px;width:10.3px;height:10.8px;background:#fff;border:1px solid #9a9a9a;box-sizing:border-box;"></div>
<svg class="a" style="left:507.3px;top:172.9px;" width="5.2" height="3.1" viewBox="0 0 5.2 3.1"><path d="M0 0 L5.2 0 L2.6 2.6 Z" fill="#333"/></svg>
<span class="t" style="left:519px;top:164.77px;font-size:13.6px;line-height:16.32px;color:#fff;font-weight:bold;">Business Dev</span>
<div class="a" style="left:616.2px;top:168.6px;width:10.3px;height:10.8px;background:#fff;border:1px solid #9a9a9a;box-sizing:border-box;"></div>
<svg class="a" style="left:618.8px;top:172.9px;" width="5.2" height="3.1" viewBox="0 0 5.2 3.1"><path d="M0 0 L5.2 0 L2.6 2.6 Z" fill="#333"/></svg>
<span class="t" style="left:630.5px;top:164.77px;font-size:13.6px;line-height:16.32px;color:#fff;font-weight:bold;">Sales Execs</span>
<div class="a" style="left:716.2px;top:168.6px;width:10.3px;height:10.8px;background:#fff;border:1px solid #9a9a9a;box-sizing:border-box;"></div>
<svg class="a" style="left:718.8px;top:172.9px;" width="5.2" height="3.1" viewBox="0 0 5.2 3.1"><path d="M0 0 L5.2 0 L2.6 2.6 Z" fill="#333"/></svg>
<span class="t" style="left:730.5px;top:164.77px;font-size:13.6px;line-height:16.32px;color:#fff;font-weight:bold;">Sales Managers</span>
<div class="a" style="left:841px;top:168.6px;width:10.3px;height:10.8px;background:#fff;border:1px solid #9a9a9a;box-sizing:border-box;"></div>
<svg class="a" style="left:843.6px;top:172.9px;" width="5.2" height="3.1" viewBox="0 0 5.2 3.1"><path d="M0 0 L5.2 0 L2.6 2.6 Z" fill="#333"/></svg>
<span class="t" style="left:855.3px;top:164.77px;font-size:13.6px;line-height:16.32px;color:#fff;font-weight:bold;">Solution Engineers</span>
<div class="a" style="left:987.4px;top:168.6px;width:10.3px;height:10.8px;background:#fff;border:1px solid #9a9a9a;box-sizing:border-box;"></div>
<svg class="a" style="left:990px;top:172.9px;" width="5.2" height="3.1" viewBox="0 0 5.2 3.1"><path d="M0 0 L5.2 0 L2.6 2.6 Z" fill="#333"/></svg>
<span class="t" style="left:1001.7px;top:164.77px;font-size:13.6px;line-height:16.32px;color:#fff;font-weight:bold;">Median Hours</span>
<div class="a" style="left:1099px;top:168.6px;width:10.3px;height:10.8px;background:#fff;border:1px solid #9a9a9a;box-sizing:border-box;"></div>
<svg class="a" style="left:1101.6px;top:172.9px;" width="5.2" height="3.1" viewBox="0 0 5.2 3.1"><path d="M0 0 L5.2 0 L2.6 2.6 Z" fill="#333"/></svg>
<div class="a" style="left:23.2px;top:180.46px;width:1087.1px;height:16.86px;background:#d9e1f2;"></div>
<div class="a" style="left:23.2px;top:179.96px;width:1087.1px;height:1px;background:#9db4e0;"></div>
<span class="t" style="left:26.2px;top:181.73px;font-size:13.6px;line-height:16.32px;color:#111;transform:scaleX(0.987);">Live Events</span>
<span class="t" style="left:161.4px;top:181.73px;font-size:13.6px;line-height:16.32px;color:#111;transform:scaleX(0.987);">Sales Kickoff</span>
<span class="t" style="left:326.38px;top:181.73px;font-size:13.6px;line-height:16.32px;color:#111;">January 2021</span>
<span class="t" style="left:415.4px;top:181.73px;font-size:13.6px;line-height:16.32px;color:#111;transform:scaleX(0.987);">Selling</span>
<span class="t" style="left:617.34px;top:181.73px;font-size:13.6px;line-height:16.32px;color:#111;">8</span>
<span class="t" style="left:709.77px;top:181.73px;font-size:13.6px;line-height:16.32px;color:#111;">16</span>
<span class="t" style="left:834.57px;top:181.73px;font-size:13.6px;line-height:16.32px;color:#111;">16</span>
<span class="t" style="left:988.54px;top:181.73px;font-size:13.6px;line-height:16.32px;color:#111;">8</span>
<span class="t" style="left:1092.57px;top:181.73px;font-size:13.6px;line-height:16.32px;color:#111;">12</span>
<div class="a" style="left:23.2px;top:196.82px;width:1087.1px;height:1px;background:#9db4e0;"></div>
<span class="t" style="left:26.2px;top:198.59px;font-size:13.6px;line-height:16.32px;color:#111;transform:scaleX(0.987);">Asynchronous</span>
<span class="t" style="left:161.4px;top:198.59px;font-size:13.6px;line-height:16.32px;color:#111;transform:scaleX(0.987);">Presentation Certification</span>
<span class="t" style="left:320.35px;top:198.59px;font-size:13.6px;line-height:16.32px;color:#111;">February 2021</span>
<span class="t" style="left:415.4px;top:198.59px;font-size:13.6px;line-height:16.32px;color:#111;transform:scaleX(0.987);">Soft Skills</span>
<span class="t" style="left:617.34px;top:198.59px;font-size:13.6px;line-height:16.32px;color:#111;">8</span>
<span class="t" style="left:717.34px;top:198.59px;font-size:13.6px;line-height:16.32px;color:#111;">8</span>
<span class="t" style="left:842.14px;top:198.59px;font-size:13.6px;line-height:16.32px;color:#111;">8</span>
<span class="t" style="left:988.54px;top:198.59px;font-size:13.6px;line-height:16.32px;color:#111;">8</span>
<span class="t" style="left:1100.14px;top:198.59px;font-size:13.6px;line-height:16.32px;color:#111;">8</span>
<div class="a" style="left:23.2px;top:214.18px;width:1087.1px;height:16.86px;background:#d9e1f2;"></div>
<div class="a" style="left:23.2px;top:213.68px;width:1087.1px;height:1px;background:#9db4e0;"></div>
<span class="t" style="left:26.2px;top:215.45px;font-size:13.6px;line-height:16.32px;color:#111;transform:scaleX(0.987);">Asynchronous</span>
<span class="t" style="left:161.4px;top:215.45px;font-size:13.6px;line-height:16.32px;color:#111;transform:scaleX(0.987);">Spring Launch</span>
<span class="t" style="left:347.56px;top:215.45px;font-size:13.6px;line-height:16.32px;color:#111;">April 2021</span>
<span class="t" style="left:415.4px;top:215.45px;font-size:13.6px;line-height:16.32px;color:#111;transform:scaleX(0.987);">Product</span>
<span class="t" style="left:617.34px;top:215.45px;font-size:13.6px;line-height:16.32px;color:#111;">3</span>
<span class="t" style="left:717.34px;top:215.45px;font-size:13.6px;line-height:16.32px;color:#111;">3</span>
<span class="t" style="left:842.14px;top:215.45px;font-size:13.6px;line-height:16.32px;color:#111;">3</span>
<span class="t" style="left:988.54px;top:215.45px;font-size:13.6px;line-height:16.32px;color:#111;">6</span>
<span class="t" style="left:1100.14px;top:215.45px;font-size:13.6px;line-height:16.32px;color:#111;">3</span>
<div class="a" style="left:23.2px;top:230.54px;width:1087.1px;height:1px;background:#9db4e0;"></div>
<span class="t" style="left:26.2px;top:232.31px;font-size:13.6px;line-height:16.32px;color:#111;transform:scaleX(0.987);">Outside</span>
<span class="t" style="left:161.4px;top:232.31px;font-size:13.6px;line-height:16.32px;color:#111;transform:scaleX(0.987);">InfoSec</span>
<span class="t" style="left:336.98px;top:232.31px;font-size:13.6px;line-height:16.32px;color:#111;">March 2021</span>
<span class="t" style="left:415.4px;top:232.31px;font-size:13.6px;line-height:16.32px;color:#111;transform:scaleX(0.987);">Process</span>
<span class="t" style="left:617.34px;top:232.31px;font-size:13.6px;line-height:16.32px;color:#111;">1</span>
<span class="t" style="left:717.34px;top:232.31px;font-size:13.6px;line-height:16.32px;color:#111;">1</span>
<span class="t" style="left:842.14px;top:232.31px;font-size:13.6px;line-height:16.32px;color:#111;">1</span>
<span class="t" style="left:988.54px;top:232.31px;font-size:13.6px;line-height:16.32px;color:#111;">1</span>
<span class="t" style="left:1100.14px;top:232.31px;font-size:13.6px;line-height:16.32px;color:#111;">1</span>
<span class="t" style="left:26.2px;top:249.17px;font-size:13.6px;line-height:16.32px;color:#111;font-weight:bold;">Total</span>
<span class="t" style="left:609.77px;top:249.17px;font-size:13.6px;line-height:16.32px;color:#111;font-weight:bold;">20</span>
<span class="t" style="left:709.77px;top:249.17px;font-size:13.6px;line-height:16.32px;color:#111;font-weight:bold;">28</span>
<span class="t" style="left:834.57px;top:249.17px;font-size:13.6px;line-height:16.32px;color:#111;font-weight:bold;">28</span>
<span class="t" style="left:980.97px;top:249.17px;font-size:13.6px;line-height:16.32px;color:#111;font-weight:bold;">23</span>
<span class="t" style="left:1092.57px;top:249.17px;font-size:13.6px;line-height:16.32px;color:#111;font-weight:bold;">24</span>
<div class="a" style="left:23.2px;top:246.9px;width:1087.1px;height:1.6px;background:#4472c4;"></div>
<div class="a" style="left:23.2px;top:264.26px;width:1087.1px;height:1px;background:#b4c6e7;"></div>
<svg class="a" style="left:1105.8px;top:260.26px;" width="4" height="4" viewBox="0 0 4 4"><path d="M4 0V4H0Z" fill="#2f5597"/></svg>
<div class="a" style="left:0px;top:148px;width:1230.6px;height:15.6px;background:#e6e6e6;"></div>
<div class="a" style="left:0px;top:148px;width:23.2px;height:519.4px;background:#e6e6e6;"></div>
<svg class="a" style="left:10.7px;top:149.6px;" width="12" height="13" viewBox="0 0 12 13"><path d="M11.6 0.3V12.6H0.3Z" fill="#b4b4b4"/></svg>
<span class="t" style="left:87.23px;top:149.4px;font-size:11.5px;line-height:13.8px;color:#505050;transform:scaleX(0.930);">A</span>
<div class="a" style="left:157.9px;top:150px;width:1px;height:13.6px;background:#c6c6c6;"></div>
<span class="t" style="left:234.33px;top:149.4px;font-size:11.5px;line-height:13.8px;color:#505050;transform:scaleX(0.930);">B</span>
<div class="a" style="left:316.9px;top:150px;width:1px;height:13.6px;background:#c6c6c6;"></div>
<span class="t" style="left:361.04px;top:149.4px;font-size:11.5px;line-height:13.8px;color:#505050;transform:scaleX(0.930);">C</span>
<div class="a" style="left:411.9px;top:150px;width:1px;height:13.6px;background:#c6c6c6;"></div>
<span class="t" style="left:460.34px;top:149.4px;font-size:11.5px;line-height:13.8px;color:#505050;transform:scaleX(0.930);">D</span>
<div class="a" style="left:515.5px;top:150px;width:1px;height:13.6px;background:#c6c6c6;"></div>
<span class="t" style="left:568.18px;top:149.4px;font-size:11.5px;line-height:13.8px;color:#505050;transform:scaleX(0.930);">E</span>
<div class="a" style="left:627px;top:150px;width:1px;height:13.6px;background:#c6c6c6;"></div>
<span class="t" style="left:674.23px;top:149.4px;font-size:11.5px;line-height:13.8px;color:#505050;transform:scaleX(0.930);">F</span>
<div class="a" style="left:727px;top:150px;width:1px;height:13.6px;background:#c6c6c6;"></div>
<span class="t" style="left:785.74px;top:149.4px;font-size:11.5px;line-height:13.8px;color:#505050;transform:scaleX(0.930);">G</span>
<div class="a" style="left:851.8px;top:150px;width:1px;height:13.6px;background:#c6c6c6;"></div>
<span class="t" style="left:921.64px;top:149.4px;font-size:11.5px;line-height:13.8px;color:#505050;transform:scaleX(0.930);">H</span>
<div class="a" style="left:998.2px;top:150px;width:1px;height:13.6px;background:#c6c6c6;"></div>
<span class="t" style="left:1053.01px;top:149.4px;font-size:11.5px;line-height:13.8px;color:#505050;transform:scaleX(0.930);">I</span>
<div class="a" style="left:1109.8px;top:150px;width:1px;height:13.6px;background:#c6c6c6;"></div>
<div class="a" style="left:1110.3px;top:148px;width:54.3px;height:15.6px;background:#d2d2d2;border-bottom:1.4px solid #217346;box-sizing:border-box;"></div>
<span class="t" style="left:1134.78px;top:149.4px;font-size:11.5px;line-height:13.8px;color:#217346;transform:scaleX(0.930);">J</span>
<div class="a" style="left:1164.1px;top:150px;width:1px;height:13.6px;background:#c6c6c6;"></div>
<span class="t" style="left:1187.58px;top:149.4px;font-size:11.5px;line-height:13.8px;color:#505050;transform:scaleX(0.930);">K</span>
<div class="a" style="left:1217.2px;top:150px;width:1px;height:13.6px;background:#c6c6c6;"></div>
<div class="a" style="left:1230.1px;top:150px;width:1px;height:13.6px;background:#c6c6c6;"></div>
<div class="a" style="left:0px;top:163.6px;width:23.2px;height:16.86px;background:#d2d2d2;border-right:1.4px solid #217346;box-sizing:border-box;"></div>
<span class="t" style="left:8.93px;top:167.53px;font-size:11.5px;line-height:13.8px;color:#217346;transform:scaleX(0.930);">1</span>
<div class="a" style="left:0px;top:179.96px;width:23.2px;height:1px;background:#c6c6c6;"></div>
<span class="t" style="left:8.93px;top:184.39px;font-size:11.5px;line-height:13.8px;color:#505050;transform:scaleX(0.930);">2</span>
<div class="a" style="left:0px;top:196.82px;width:23.2px;height:1px;background:#c6c6c6;"></div>
<span class="t" style="left:8.93px;top:201.25px;font-size:11.5px;line-height:13.8px;color:#505050;transform:scaleX(0.930);">3</span>
<div class="a" style="left:0px;top:213.68px;width:23.2px;height:1px;background:#c6c6c6;"></div>
<span class="t" style="left:8.93px;top:218.11px;font-size:11.5px;line-height:13.8px;color:#505050;transform:scaleX(0.930);">4</span>
<div class="a" style="left:0px;top:230.54px;width:23.2px;height:1px;background:#c6c6c6;"></div>
<span class="t" style="left:8.93px;top:234.97px;font-size:11.5px;line-height:13.8px;color:#505050;transform:scaleX(0.930);">5</span>
<div class="a" style="left:0px;top:247.4px;width:23.2px;height:1px;background:#c6c6c6;"></div>
<span class="t" style="left:8.93px;top:251.83px;font-size:11.5px;line-height:13.8px;color:#505050;transform:scaleX(0.930);">6</span>
<div class="a" style="left:0px;top:264.26px;width:23.2px;height:1px;background:#c6c6c6;"></div>
<span class="t" style="left:8.93px;top:268.69px;font-size:11.5px;line-height:13.8px;color:#505050;transform:scaleX(0.930);">7</span>
<div class="a" style="left:0px;top:281.12px;width:23.2px;height:1px;background:#c6c6c6;"></div>
<span class="t" style="left:8.93px;top:285.55px;font-size:11.5px;line-height:13.8px;color:#505050;transform:scaleX(0.930);">8</span>
<div class="a" style="left:0px;top:297.98px;width:23.2px;height:1px;background:#c6c6c6;"></div>
<span class="t" style="left:8.93px;top:302.41px;font-size:11.5px;line-height:13.8px;color:#505050;transform:scaleX(0.930);">9</span>
<div class="a" style="left:0px;top:314.84px;width:23.2px;height:1px;background:#c6c6c6;"></div>
<span class="t" style="left:5.95px;top:319.27px;font-size:11.5px;line-height:13.8px;color:#505050;transform:scaleX(0.930);">10</span>
<div class="a" style="left:0px;top:331.7px;width:23.2px;height:1px;background:#c6c6c6;"></div>
<span class="t" style="left:6.35px;top:336.13px;font-size:11.5px;line-height:13.8px;color:#505050;transform:scaleX(0.930);">11</span>
<div class="a" style="left:0px;top:348.56px;width:23.2px;height:1px;background:#c6c6c6;"></div>
<span class="t" style="left:5.95px;top:352.99px;font-size:11.5px;line-height:13.8px;color:#505050;transform:scaleX(0.930);">12</span>
<div class="a" style="left:0px;top:365.42px;width:23.2px;height:1px;background:#c6c6c6;"></div>
<span class="t" style="left:5.95px;top:369.85px;font-size:11.5px;line-height:13.8px;color:#505050;transform:scaleX(0.930);">13</span>
<div class="a" style="left:0px;top:382.28px;width:23.2px;height:1px;background:#c6c6c6;"></div>
<span class="t" style="left:5.95px;top:386.71px;font-size:11.5px;line-height:13.8px;color:#505050;transform:scaleX(0.930);">14</span>
<div class="a" style="left:0px;top:399.14px;width:23.2px;height:1px;background:#c6c6c6;"></div>
<span class="t" style="left:5.95px;top:403.57px;font-size:11.5px;line-height:13.8px;color:#505050;transform:scaleX(0.930);">15</span>
<div class="a" style="left:0px;top:416px;width:23.2px;height:1px;background:#c6c6c6;"></div>
<span class="t" style="left:5.95px;top:420.43px;font-size:11.5px;line-height:13.8px;color:#505050;transform:scaleX(0.930);">16</span>
<div class="a" style="left:0px;top:432.86px;width:23.2px;height:1px;background:#c6c6c6;"></div>
<span class="t" style="left:5.95px;top:437.29px;font-size:11.5px;line-height:13.8px;color:#505050;transform:scaleX(0.930);">17</span>
<div class="a" style="left:0px;top:449.72px;width:23.2px;height:1px;background:#c6c6c6;"></div>
<span class="t" style="left:5.95px;top:454.15px;font-size:11.5px;line-height:13.8px;color:#505050;transform:scaleX(0.930);">18</span>
<div class="a" style="left:0px;top:466.58px;width:23.2px;height:1px;background:#c6c6c6;"></div>
<span class="t" style="left:5.95px;top:471.01px;font-size:11.5px;line-height:13.8px;color:#505050;transform:scaleX(0.930);">19</span>
<div class="a" style="left:0px;top:483.44px;width:23.2px;height:1px;background:#c6c6c6;"></div>
<span class="t" style="left:5.95px;top:487.87px;font-size:11.5px;line-height:13.8px;color:#505050;transform:scaleX(0.930);">20</span>
<div class="a" style="left:0px;top:500.3px;width:23.2px;height:1px;background:#c6c6c6;"></div>
<span class="t" style="left:5.95px;top:504.73px;font-size:11.5px;line-height:13.8px;color:#505050;transform:scaleX(0.930);">21</span>
<div class="a" style="left:0px;top:517.16px;width:23.2px;height:1px;background:#c6c6c6;"></div>
<span class="t" style="left:5.95px;top:521.59px;font-size:11.5px;line-height:13.8px;color:#505050;transform:scaleX(0.930);">22</span>
<div class="a" style="left:0px;top:534.02px;width:23.2px;height:1px;background:#c6c6c6;"></div>
<span class="t" style="left:5.95px;top:538.45px;font-size:11.5px;line-height:13.8px;color:#505050;transform:scaleX(0.930);">23</span>
<div class="a" style="left:0px;top:550.88px;width:23.2px;height:1px;background:#c6c6c6;"></div>
<span class="t" style="left:5.95px;top:555.31px;font-size:11.5px;line-height:13.8px;color:#505050;transform:scaleX(0.930);">24</span>
<div class="a" style="left:0px;top:567.74px;width:23.2px;height:1px;background:#c6c6c6;"></div>
<span class="t" style="left:5.95px;top:572.17px;font-size:11.5px;line-height:13.8px;color:#505050;transform:scaleX(0.930);">25</span>
<div class="a" style="left:0px;top:584.6px;width:23.2px;height:1px;background:#c6c6c6;"></div>
<span class="t" style="left:5.95px;top:589.03px;font-size:11.5px;line-height:13.8px;color:#505050;transform:scaleX(0.930);">26</span>
<div class="a" style="left:0px;top:601.46px;width:23.2px;height:1px;background:#c6c6c6;"></div>
<span class="t" style="left:5.95px;top:605.89px;font-size:11.5px;line-height:13.8px;color:#505050;transform:scaleX(0.930);">27</span>
<div class="a" style="left:0px;top:618.32px;width:23.2px;height:1px;background:#c6c6c6;"></div>
<span class="t" style="left:5.95px;top:622.75px;font-size:11.5px;line-height:13.8px;color:#505050;transform:scaleX(0.930);">28</span>
<div class="a" style="left:0px;top:635.18px;width:23.2px;height:1px;background:#c6c6c6;"></div>
<span class="t" style="left:5.95px;top:639.61px;font-size:11.5px;line-height:13.8px;color:#505050;transform:scaleX(0.930);">29</span>
<div class="a" style="left:0px;top:652.04px;width:23.2px;height:1px;background:#c6c6c6;"></div>
<div class="a" style="left:0px;top:652.54px;width:23.2px;height:14.86px;overflow:hidden;"><span class="t" style="left:5.5px;top:3.93px;font-size:11.5px;line-height:13.8px;color:#444;">30</span></div>
<div class="a" style="left:22.7px;top:148px;width:1px;height:519.4px;background:#bdbdbd;"></div>
<div class="a" style="left:0px;top:163.1px;width:1230.6px;height:1px;background:#bdbdbd;"></div>
<div class="a" style="left:1109.5px;top:162.8px;width:55.9px;height:18.26px;border:1.6px solid #217346;box-sizing:border-box;"></div>
<div class="a" style="left:1162.1px;top:177.96px;width:4.5px;height:4.5px;background:#217346;border:1px solid #fff;box-sizing:border-box;"></div>
<div class="a" style="left:1230.6px;top:148px;width:10.4px;height:519.4px;background:#e6e6e6;"></div>
<div class="a" style="left:1232px;top:149px;width:9px;height:11px;background:#fff;border:1px solid #c8c8c8;box-sizing:border-box;"></div>
<svg class="a" style="left:1234.3px;top:153px;" width="4.4" height="2.6" viewBox="0 0 4.4 2.6"><path d="M0 2.6L2.2 0L4.4 2.6Z" fill="#555"/></svg>
<div class="a" style="left:1232px;top:161px;width:9px;height:479.4px;background:#fff;border:1px solid #c8c8c8;box-sizing:border-box;"></div>
<div class="a" style="left:0px;top:667px;width:1244px;height:18px;background:#e6e6e6;border-top:1px solid #c6c6c6;box-sizing:border-box;"></div>
<svg class="a" style="left:16.9px;top:675.2px;" width="3.2" height="2.1" viewBox="0 0 3.2 2.1"><path d="M0 0 L3.2 0 L1.6 1.6 Z" fill="#c8c8c8"/></svg><svg class="a" style="left:35.4px;top:675.2px;" width="3.2" height="2.1" viewBox="0 0 3.2 2.1"><path d="M0 0 L3.2 0 L1.6 1.6 Z" fill="#c8c8c8"/></svg>
<div class="a" style="left:64.9px;top:667px;width:55.7px;height:17.2px;background:#fff;border-bottom:2px solid #217346;box-sizing:border-box;border-right:1px solid #c6c6c6;"></div>
<span class="t" style="left:72.8px;top:671.1px;font-size:8.5px;line-height:10.2px;color:#217346;font-weight:bold;transform:scaleX(0.978);">Audit Log</span>
<span class="t" style="left:128.6px;top:671.1px;font-size:8.5px;line-height:10.2px;color:#555;transform:scaleX(1.007);">Aggregates</span>
<div class="a" style="left:180.5px;top:669.5px;width:1px;height:14px;background:#b0b0b0;"></div>
<svg class="a" style="left:201.8px;top:670.7px;" width="11" height="11" viewBox="0 0 11 11"><circle cx="5.5" cy="5.5" r="4.8" fill="none" stroke="#777" stroke-width="0.8"/><path d="M5.5 2.8V8.2M2.8 5.5H8.2" stroke="#777" stroke-width="0.8"/></svg>
<div class="a" style="left:0px;top:685px;width:1244px;height:14px;background:#f3f2f1;border-top:1px solid #d0d0d0;box-sizing:border-box;"></div>
<svg class="a" style="left:5px;top:687.5px;" width="9.5" height="9" viewBox="0 0 9.5 9"><rect x="0.5" y="0.5" width="8" height="6.5" fill="none" stroke="#555" stroke-width="0.8"/><path d="M0.5 2.5H8.5" stroke="#555" stroke-width="0.8"/><circle cx="6.5" cy="6.5" r="2" fill="#f3f2f1" stroke="#555" stroke-width="0.7"/></svg>
<div class="a" style="left:0px;top:697.8px;width:1244px;height:1.2px;background:#505050;"></div></div>
<div class="win" style="left:596px;top:342px"><div class="a" style="left:0px;top:22px;width:1244px;height:81.5px;background:#f3f2f1;"></div>
<div class="a" style="left:0px;top:103.5px;width:1244px;height:3px;background:linear-gradient(#d8d8d8,#e6e6e6);"></div>
<div class="a" style="left:0px;top:0px;width:1244px;height:22px;background:#217346;"></div>
<span class="t" style="left:14.7px;top:5.5px;font-size:8.5px;line-height:10.2px;color:#fff;transform:scaleX(0.871);">AutoSave</span>
<div class="a" style="left:51.8px;top:5.6px;width:24.7px;height:10.4px;background:#fff;border-radius:5.2px;"></div>
<span class="t" style="left:55.5px;top:6.9px;font-size:6.5px;line-height:7.8px;color:#217346;transform:scaleX(0.865);">On</span>
<div class="a" style="left:68px;top:8.1px;width:5.4px;height:5.4px;background:#217346;border-radius:3px;"></div>
<svg class="a" style="left:85.8px;top:5px;" width="11.5" height="11.5" viewBox="0 0 11.5 11.5"><path d="M1 1H8.5L10.5 3V10.5H1Z M3 1V4H7.5V1 M3 10.5V6.5H8.5V10.5" fill="none" stroke="#fff" stroke-width="0.9"/></svg>
<svg class="a" style="left:106.5px;top:5px;" width="11" height="11" viewBox="0 0 11 11"><path d="M1.5 1.5V5.5H5.5 M1.8 5.2C3.5 2.2 8 2 9.2 5.2C10 8 7.5 9.8 5 10" fill="none" stroke="#fff" stroke-width="1"/></svg>
<svg class="a" style="left:119.8px;top:9.95px;" width="3.4" height="2.2" viewBox="0 0 3.4 2.2"><path d="M0 0 L3.4 0 L1.7 1.7 Z" fill="#fff"/></svg>
<svg class="a" style="left:130.5px;top:5px;" width="11" height="11" viewBox="0 0 11 11"><path d="M9.5 1.5V5.5H5.5 M9.2 5.2C7.5 2.2 3 2 1.8 5.2C1 8 3.5 9.8 6 10" fill="none" stroke="#4d8f6b" stroke-width="1"/></svg>
<svg class="a" style="left:144.3px;top:9.95px;" width="3.4" height="2.2" viewBox="0 0 3.4 2.2"><path d="M0 0 L3.4 0 L1.7 1.7 Z" fill="#4d8f6b"/></svg>
<svg class="a" style="left:153px;top:4.5px;" width="10" height="13" viewBox="0 0 10 13"><circle cx="4.5" cy="4" r="3.2" fill="none" stroke="#fff" stroke-width="0.9"/><path d="M4.5 3V8.5L7.5 8.2C9 8.4 9 10 8.3 11.5C7 12.8 4 12.5 3.2 10.5L2 8.5" fill="none" stroke="#fff" stroke-width="0.9"/></svg>
<svg class="a" style="left:167.7px;top:9.95px;" width="3.4" height="2.2" viewBox="0 0 3.4 2.2"><path d="M0 0 L3.4 0 L1.7 1.7 Z" fill="#fff"/></svg>
<div class="a" style="left:181.5px;top:8.2px;width:5px;height:1px;background:#fff;"></div>
<svg class="a" style="left:181.8px;top:9.9px;" width="4.4" height="2.7" viewBox="0 0 4.4 2.7"><path d="M0 0 L4.4 0 L2.2 2.2 Z" fill="#fff"/></svg>
<span class="t" style="left:262.4px;top:5.3px;font-size:8.5px;line-height:10.2px;color:#fff;transform:scaleX(0.895);">SEC Festival - Training Volume Audit.xlsx - Saved</span>
<svg class="a" style="left:435px;top:10.05px;" width="3" height="2" viewBox="0 0 3 2"><path d="M0 0 L3 0 L1.5 1.5 Z" fill="#fff"/></svg>
<div class="a" style="left:510.2px;top:3.9px;width:236.6px;height:14.4px;background:#9fd0b3;"></div>
<svg class="a" style="left:522px;top:6.2px;" width="9.5" height="9.5" viewBox="0 0 9.5 9.5"><circle cx="5.8" cy="3.8" r="3" fill="none" stroke="#2b5c40" stroke-width="0.9"/><path d="M3.7 6L0.8 8.9" stroke="#2b5c40" stroke-width="0.9"/></svg>
<span class="t" style="left:541.8px;top:6.1px;font-size:8.5px;line-height:10.2px;color:#2b5c40;transform:scaleX(0.835);">Search</span>
<span class="t" style="left:1063.7px;top:5.9px;font-size:8.5px;line-height:10.2px;color:#fff;transform:scaleX(0.855);">Kyle Abel</span>
<div class="a" style="left:1101.6px;top:3.3px;width:15.4px;height:15.4px;background:#b46c1c;border-radius:8px;"></div>
<span class="t" style="left:1105.3px;top:7.3px;font-size:6.5px;line-height:7.8px;color:#fff;transform:scaleX(0.923);">KA</span>
<svg class="a" style="left:1134.8px;top:7.3px;" width="9" height="7.5" viewBox="0 0 9 7.5"><rect x="0.5" y="0.5" width="8" height="6" fill="none" stroke="#fff" stroke-width="0.9"/><path d="M0.5 2.5H8.5M4.5 2.5V6.5" stroke="#fff" stroke-width="0.9"/></svg>
<div class="a" style="left:1165.5px;top:10.5px;width:8px;height:1px;background:#fff;"></div>
<svg class="a" style="left:1196px;top:7px;" width="8" height="8" viewBox="0 0 8 8"><rect x="0.5" y="2" width="5" height="5" fill="none" stroke="#fff" stroke-width="0.9"/><path d="M2 2V0.5H7V5.5H5.5" fill="none" stroke="#fff" stroke-width="0.9"/></svg>
<svg class="a" style="left:1225.5px;top:7.2px;" width="7.5" height="7.5" viewBox="0 0 7.5 7.5"><path d="M0.5 0.5L7 7M7 0.5L0.5 7" stroke="#fff" stroke-width="1"/></svg>
<span class="t" style="left:10.9px;top:26.3px;font-size:9.5px;line-height:11.4px;color:#444;transform:scaleX(0.817);">File</span>
<span class="t" style="left:44.3px;top:26.3px;font-size:9.5px;line-height:11.4px;color:#222;transform:scaleX(0.943);">Home</span>
<span class="t" style="left:86.5px;top:26.3px;font-size:9.5px;line-height:11.4px;color:#444;transform:scaleX(0.846);">Insert</span>
<span class="t" style="left:125.5px;top:26.3px;font-size:9.5px;line-height:11.4px;color:#444;transform:scaleX(0.871);">Draw</span>
<span class="t" style="left:164.4px;top:26.3px;font-size:9.5px;line-height:11.4px;color:#444;transform:scaleX(0.866);">Page Layout</span>
<span class="t" style="left:229.7px;top:26.3px;font-size:9.5px;line-height:11.4px;color:#444;transform:scaleX(0.871);">Formulas</span>
<span class="t" style="left:283.5px;top:26.3px;font-size:9.5px;line-height:11.4px;color:#444;transform:scaleX(0.827);">Data</span>
<span class="t" style="left:319.4px;top:26.3px;font-size:9.5px;line-height:11.4px;color:#444;transform:scaleX(0.831);">Review</span>
<span class="t" style="left:363.4px;top:26.3px;font-size:9.5px;line-height:11.4px;color:#444;transform:scaleX(0.862);">View</span>
<span class="t" style="left:399.3px;top:26.3px;font-size:9.5px;line-height:11.4px;color:#444;transform:scaleX(0.865);">Help</span>
<div class="a" style="left:44.2px;top:37.9px;width:24.8px;height:2px;background:#217346;"></div>
<span class="t" style="left:436.9px;top:26.3px;font-size:9.5px;line-height:11.4px;color:#217346;transform:scaleX(0.859);">PivotTable Analyze</span>
<span class="t" style="left:525.7px;top:26.3px;font-size:9.5px;line-height:11.4px;color:#217346;transform:scaleX(0.869);">Design</span>
<div class="a" style="left:1123px;top:25.7px;width:42.4px;height:12.9px;background:#fff;"></div>
<svg class="a" style="left:1127.5px;top:28px;" width="7" height="8" viewBox="0 0 7 8"><path d="M1 3.5V7.5H6V5.5 M2.5 5C3 3 4.5 2.3 6.3 2.3 M4.8 0.6L6.5 2.3L4.8 4" fill="none" stroke="#444" stroke-width="0.8"/></svg>
<span class="t" style="left:1137.5px;top:26.8px;font-size:9px;line-height:10.8px;color:#333;transform:scaleX(0.937);">Share</span>
<div class="a" style="left:1172.7px;top:25.7px;width:62.7px;height:12.9px;background:#fff;"></div>
<svg class="a" style="left:1177.5px;top:28.3px;" width="7.5" height="7.5" viewBox="0 0 7.5 7.5"><path d="M0.5 0.5H7V5H3L1.5 6.8V5H0.5Z" fill="none" stroke="#444" stroke-width="0.8"/></svg>
<span class="t" style="left:1187px;top:26.8px;font-size:9px;line-height:10.8px;color:#333;transform:scaleX(0.977);">Comments</span>
<svg class="a" style="left:11px;top:47px;" width="19" height="20" viewBox="0 0 19 20"><rect x="1" y="3.5" width="11.5" height="14" fill="#fdf6e9" stroke="#e0a33c" stroke-width="1.2"/><path d="M4 3.5V2H5.5C5.5 0.6 8 0.6 8 2H9.5V3.5" fill="#f3f2f1" stroke="#777" stroke-width="0.8"/><rect x="8" y="8" width="9.5" height="11" fill="#fff" stroke="#444" stroke-width="1"/></svg>
<span class="t" style="left:9.9px;top:67.9px;font-size:8.5px;line-height:10.2px;color:#333;transform:scaleX(0.833);">Paste</span>
<svg class="a" style="left:15.8px;top:80.5px;" width="6.4" height="5.4" viewBox="0 0 6.4 5.4"><path d="M1 1.1 L3.2 3.08 L5.4 1.1" fill="none" stroke="#555" stroke-width="0.9"/></svg>
<svg class="a" style="left:36px;top:47.3px;" width="7.5" height="9.5" viewBox="0 0 7.5 9.5"><path d="M1.5 0.5L5.2 6.5M6 0.5L2.3 6.5" stroke="#444" stroke-width="0.8"/><circle cx="1.8" cy="7.7" r="1.3" fill="none" stroke="#2b7cd3" stroke-width="0.9"/><circle cx="5.7" cy="7.7" r="1.3" fill="none" stroke="#2b7cd3" stroke-width="0.9"/></svg>
<span class="t" style="left:46.8px;top:46.7px;font-size:8.5px;line-height:10.2px;color:#333;transform:scaleX(0.877);">Cut</span>
<svg class="a" style="left:34px;top:62px;" width="11" height="11" viewBox="0 0 11 11"><path d="M0.5 0.5H5.5V8.5H0.5Z" fill="#f3f2f1" stroke="#444" stroke-width="0.9"/><path d="M3.5 2.5H8L10.5 5V10.5H3.5Z" fill="#fff" stroke="#444" stroke-width="0.9"/><path d="M5.5 7.5H8.5" stroke="#444" stroke-width="0.8"/></svg>
<span class="t" style="left:46.8px;top:62.3px;font-size:8.5px;line-height:10.2px;color:#333;transform:scaleX(0.887);">Copy</span>
<svg class="a" style="left:69.8px;top:65.6px;" width="6.4" height="5.4" viewBox="0 0 6.4 5.4"><path d="M1 1.1 L3.2 3.08 L5.4 1.1" fill="none" stroke="#555" stroke-width="0.9"/></svg>
<svg class="a" style="left:35px;top:77.5px;" width="10" height="10" viewBox="0 0 10 10"><path d="M1 6L4 9L8 5L5 2Z" fill="#f0a33c" stroke="#d9822b" stroke-width="0.6"/><path d="M6.5 3.5L9.3 0.7" stroke="#444" stroke-width="1.3"/><path d="M5 2L8 5" stroke="#444" stroke-width="1"/></svg>
<span class="t" style="left:46.8px;top:77.6px;font-size:8.5px;line-height:10.2px;color:#333;transform:scaleX(0.886);">Format Painter</span>
<span class="t" style="left:31.7px;top:93.5px;font-size:8px;line-height:9.6px;color:#444;transform:scaleX(0.943);">Clipboard</span>
<svg class="a" style="left:99px;top:95.3px;" width="6" height="6" viewBox="0 0 6 6"><path d="M0.5 4V0.5H4M2.5 2.5L5.5 5.5M5.5 3V5.5H3" fill="none" stroke="#666" stroke-width="0.8"/></svg>
<div class="a" style="left:105px;top:44.3px;width:1px;height:55.7px;background:#d2d0ce;"></div>
<div class="a" style="left:112.6px;top:49.6px;width:79.3px;height:13.8px;background:#fff;border:1px solid #d4d2d0;box-sizing:border-box;"></div>
<span class="t" style="left:115px;top:51.7px;font-size:8.5px;line-height:10.2px;color:#333;transform:scaleX(0.882);">Arial</span>
<svg class="a" style="left:183.7px;top:55px;" width="5.6" height="4.6" viewBox="0 0 5.6 4.6"><path d="M1 0.9 L2.8 2.52 L4.6 0.9" fill="none" stroke="#555" stroke-width="0.9"/></svg>
<div class="a" style="left:190.9px;top:49.6px;width:28.7px;height:13.8px;background:#fff;border:1px solid #d4d2d0;box-sizing:border-box;"></div>
<span class="t" style="left:194.5px;top:51.7px;font-size:8.5px;line-height:10.2px;color:#333;transform:scaleX(0.846);">12</span>
<svg class="a" style="left:212.2px;top:55px;" width="5.6" height="4.6" viewBox="0 0 5.6 4.6"><path d="M1 0.9 L2.8 2.52 L4.6 0.9" fill="none" stroke="#555" stroke-width="0.9"/></svg>
<span class="t" style="left:222px;top:48.6px;font-size:12px;line-height:14.4px;color:#333;">A</span>
<svg class="a" style="left:229.5px;top:50px;" width="4" height="3" viewBox="0 0 4 3"><path d="M0.3 2.5L2 0.6L3.7 2.5" fill="none" stroke="#2b7cd3" stroke-width="0.8"/></svg>
<span class="t" style="left:237px;top:50.5px;font-size:10px;line-height:12px;color:#333;transform:scaleX(0.975);">A</span>
<svg class="a" style="left:243px;top:50.5px;" width="4" height="3" viewBox="0 0 4 3"><path d="M0.3 0.5L2 2.4L3.7 0.5" fill="none" stroke="#2b7cd3" stroke-width="0.8"/></svg>
<span class="t" style="left:116.6px;top:70.9px;font-size:9.5px;line-height:11.4px;color:#333;font-weight:bold;transform:scaleX(0.816);">B</span>
<span class="t" style="left:130.8px;top:72.2px;font-size:9px;line-height:10.8px;color:#333;font-style:italic;transform:scaleX(1.320);font-family:'Liberation Serif',serif;">I</span>
<span class="t" style="left:144.2px;top:70.6px;font-size:9.5px;line-height:11.4px;color:#333;transform:scaleX(0.875);text-decoration:underline;">U</span>
<svg class="a" style="left:156px;top:75.3px;" width="6.4" height="5.4" viewBox="0 0 6.4 5.4"><path d="M1 1.1 L3.2 3.08 L5.4 1.1" fill="none" stroke="#555" stroke-width="0.9"/></svg>
<div class="a" style="left:168px;top:69px;width:1px;height:16px;background:#d2d0ce;"></div>
<svg class="a" style="left:171.5px;top:71.5px;" width="11" height="11" viewBox="0 0 11 11"><path d="M0.5 0.5H10" stroke="#555" stroke-width="0.9" stroke-dasharray="1.5 1.3"/><path d="M0.5 0.5V10M5.2 0.5V10M10 0.5V10M0.5 5H10" stroke="#555" stroke-width="0.9" stroke-dasharray="1.5 1.3"/><path d="M0 10.3H11" stroke="#222" stroke-width="1.2"/></svg>
<svg class="a" style="left:185.9px;top:75.3px;" width="6.4" height="5.4" viewBox="0 0 6.4 5.4"><path d="M1 1.1 L3.2 3.08 L5.4 1.1" fill="none" stroke="#555" stroke-width="0.9"/></svg>
<div class="a" style="left:197px;top:69px;width:1px;height:16px;background:#d2d0ce;"></div>
<svg class="a" style="left:202.3px;top:70.8px;" width="11" height="12" viewBox="0 0 11 12"><path d="M4.5 1L8.5 5L5 8.3L1.3 4.7Z" fill="#fff" stroke="#444" stroke-width="0.8"/><path d="M9 6C9.8 7.2 9.8 8 9 8.3C8.2 8 8.2 7.2 9 6Z" fill="#444"/><rect x="0.3" y="9.5" width="10" height="2.3" fill="#ffe81a"/></svg>
<svg class="a" style="left:215.2px;top:75.3px;" width="6.4" height="5.4" viewBox="0 0 6.4 5.4"><path d="M1 1.1 L3.2 3.08 L5.4 1.1" fill="none" stroke="#555" stroke-width="0.9"/></svg>
<span class="t" style="left:227.9px;top:70.62px;font-size:9.3px;line-height:11.16px;color:#333;transform:scaleX(1.096);">A</span>
<div class="a" style="left:226.3px;top:80.1px;width:10px;height:2px;background:#e8141c;"></div>
<svg class="a" style="left:239.6px;top:75.3px;" width="6.4" height="5.4" viewBox="0 0 6.4 5.4"><path d="M1 1.1 L3.2 3.08 L5.4 1.1" fill="none" stroke="#555" stroke-width="0.9"/></svg>
<span class="t" style="left:166.7px;top:93.5px;font-size:8px;line-height:9.6px;color:#444;transform:scaleX(0.937);">Font</span>
<svg class="a" style="left:245px;top:95.3px;" width="6" height="6" viewBox="0 0 6 6"><path d="M0.5 4V0.5H4M2.5 2.5L5.5 5.5M5.5 3V5.5H3" fill="none" stroke="#666" stroke-width="0.8"/></svg>
<div class="a" style="left:252px;top:44.3px;width:1px;height:55.7px;background:#d2d0ce;"></div>
<div class="a" style="left:287px;top:48.8px;width:15px;height:14.7px;background:#c8c6c4;"></div>
<svg class="a" style="left:260.15px;top:50.9px;" width="9.5" height="6.8" viewBox="0 0 9.5 6.8"><path d="M0 0.5H9.5" stroke="#3b3b3b" stroke-width="1"/><path d="M0 3.4H9.5" stroke="#3b3b3b" stroke-width="1"/><path d="M0 6.3H9.5" stroke="#3b3b3b" stroke-width="1"/></svg>
<svg class="a" style="left:274.75px;top:52.8px;" width="9.5" height="6.4" viewBox="0 0 9.5 6.4"><path d="M0 0.5H9.5" stroke="#3b3b3b" stroke-width="1"/><path d="M0 3.2H9.5" stroke="#3b3b3b" stroke-width="1"/><path d="M0 5.9H9.5" stroke="#3b3b3b" stroke-width="1"/></svg>
<svg class="a" style="left:289.55px;top:54.8px;" width="9.5" height="6.8" viewBox="0 0 9.5 6.8"><path d="M0 0.5H9.5" stroke="#3b3b3b" stroke-width="1"/><path d="M0 3.4H9.5" stroke="#3b3b3b" stroke-width="1"/><path d="M0 6.3H9.5" stroke="#3b3b3b" stroke-width="1"/></svg>
<svg class="a" style="left:260.15px;top:72.4px;" width="9.5" height="8.8" viewBox="0 0 9.5 8.8"><path d="M0 0.5H9.5" stroke="#3b3b3b" stroke-width="1"/><path d="M0 3.1H6.5" stroke="#3b3b3b" stroke-width="1"/><path d="M0 5.7H9.5" stroke="#3b3b3b" stroke-width="1"/><path d="M0 8.3H6.5" stroke="#3b3b3b" stroke-width="1"/></svg>
<svg class="a" style="left:274.75px;top:72.4px;" width="9.5" height="8.8" viewBox="0 0 9.5 8.8"><path d="M0 0.5H9.5" stroke="#3b3b3b" stroke-width="1"/><path d="M2 3.1H7.5" stroke="#3b3b3b" stroke-width="1"/><path d="M0 5.7H9.5" stroke="#3b3b3b" stroke-width="1"/><path d="M2 8.3H7.5" stroke="#3b3b3b" stroke-width="1"/></svg>
<svg class="a" style="left:289.55px;top:72.4px;" width="9.5" height="8.8" viewBox="0 0 9.5 8.8"><path d="M0 0.5H9.5" stroke="#3b3b3b" stroke-width="1"/><path d="M3 3.1H9.5" stroke="#3b3b3b" stroke-width="1"/><path d="M0 5.7H9.5" stroke="#3b3b3b" stroke-width="1"/><path d="M3 8.3H9.5" stroke="#3b3b3b" stroke-width="1"/></svg>
<svg class="a" style="left:310px;top:51.5px;" width="10" height="10" viewBox="0 0 10 10"><path d="M2 9L9.5 2.5" stroke="#2b7cd3" stroke-width="0.9"/><path d="M7.3 2.2H9.7V4.6" fill="none" stroke="#2b7cd3" stroke-width="0.8"/></svg><span class="t" style="left:309.5px;top:51.3px;font-size:6.5px;line-height:7.8px;color:#444;transform:scaleX(0.830);transform:scaleX(0.8) rotate(-40deg);">ab</span>
<svg class="a" style="left:322.6px;top:56.4px;" width="3.2" height="2.1" viewBox="0 0 3.2 2.1"><path d="M0 0 L3.2 0 L1.6 1.6 Z" fill="#555"/></svg>
<div class="a" style="left:337px;top:48px;width:1px;height:37px;background:#d2d0ce;"></div>
<span class="t" style="left:344.8px;top:50.4px;font-size:6.5px;line-height:7.8px;color:#444;transform:scaleX(0.830);">ab</span>
<svg class="a" style="left:345px;top:52px;" width="9.5" height="10.5" viewBox="0 0 9.5 10.5"><path d="M8.5 0.5V6.5H2 M3.8 4.7L2 6.5L3.8 8.3" fill="none" stroke="#2b7cd3" stroke-width="0.9"/><path d="M0.5 9.5H5" stroke="#444" stroke-width="0.8"/></svg>
<span class="t" style="left:355.9px;top:52.1px;font-size:8.5px;line-height:10.2px;color:#333;transform:scaleX(0.872);">Wrap Text</span>
<svg class="a" style="left:309.6px;top:72.5px;" width="10" height="9" viewBox="0 0 10 9"><path d="M0 0.5H10M4.5 3.2H10M4.5 5.8H10M0 8.5H10" stroke="#555" stroke-width="0.9"/><path d="M3.5 4.5H0.5M1.8 3.2L0.5 4.5L1.8 5.8" fill="none" stroke="#2b7cd3" stroke-width="0.8"/></svg>
<svg class="a" style="left:323.4px;top:72.5px;" width="10" height="9" viewBox="0 0 10 9"><path d="M0 0.5H10M4.5 3.2H10M4.5 5.8H10M0 8.5H10" stroke="#555" stroke-width="0.9"/><path d="M0.3 4.5H3.3M2 3.2L3.3 4.5L2 5.8" fill="none" stroke="#2b7cd3" stroke-width="0.8"/></svg>
<svg class="a" style="left:342.8px;top:71.7px;" width="10.5" height="10.5" viewBox="0 0 10.5 10.5"><rect x="0.5" y="0.5" width="9.5" height="9.5" fill="#fff" stroke="#2b6cb0" stroke-width="1"/><rect x="0.5" y="3" width="9.5" height="4.4" fill="#d6e8f9" stroke="#2b6cb0" stroke-width="0.8"/><path d="M3.5 0.5V3M7 0.5V3M3.5 7.4V10M7 7.4V10" stroke="#2b6cb0" stroke-width="0.7"/><path d="M2.3 5.3H8.2M3.3 4.3L2.3 5.3L3.3 6.3M7.2 4.3L8.2 5.3L7.2 6.3" fill="none" stroke="#2b7cd3" stroke-width="0.7"/></svg>
<span class="t" style="left:355.9px;top:72.7px;font-size:8.5px;line-height:10.2px;color:#333;transform:scaleX(0.920);">Merge &amp; Center</span>
<svg class="a" style="left:416.2px;top:75.6px;" width="6.4" height="5.4" viewBox="0 0 6.4 5.4"><path d="M1 1.1 L3.2 3.08 L5.4 1.1" fill="none" stroke="#555" stroke-width="0.9"/></svg>
<span class="t" style="left:319.4px;top:93.5px;font-size:8px;line-height:9.6px;color:#444;transform:scaleX(0.953);">Alignment</span>
<svg class="a" style="left:423px;top:95.3px;" width="6" height="6" viewBox="0 0 6 6"><path d="M0.5 4V0.5H4M2.5 2.5L5.5 5.5M5.5 3V5.5H3" fill="none" stroke="#666" stroke-width="0.8"/></svg>
<div class="a" style="left:429px;top:44.3px;width:1px;height:55.7px;background:#d2d0ce;"></div>
<div class="a" style="left:436.3px;top:49px;width:86.7px;height:15.3px;background:#fff;border:1px solid #d0cecc;box-sizing:border-box;"></div>
<span class="t" style="left:438.5px;top:51.7px;font-size:8.5px;line-height:10.2px;color:#333;transform:scaleX(0.850);">General</span>
<svg class="a" style="left:515.5px;top:55.2px;" width="5.6" height="4.6" viewBox="0 0 5.6 4.6"><path d="M1 0.9 L2.8 2.52 L4.6 0.9" fill="none" stroke="#555" stroke-width="0.9"/></svg>
<span class="t" style="left:439.7px;top:70.1px;font-size:11.5px;line-height:13.8px;color:#333;transform:scaleX(0.938);">$</span>
<svg class="a" style="left:450.8px;top:75.6px;" width="6.4" height="5.4" viewBox="0 0 6.4 5.4"><path d="M1 1.1 L3.2 3.08 L5.4 1.1" fill="none" stroke="#555" stroke-width="0.9"/></svg>
<span class="t" style="left:462.05px;top:70.1px;font-size:11.5px;line-height:13.8px;color:#333;transform:scaleX(0.929);">%</span>
<span class="t" style="left:479.38px;top:58.6px;font-size:21px;line-height:25.2px;color:#222;font-weight:bold;font-family:'Liberation Serif',serif;">,</span>
<div class="a" style="left:490px;top:69px;width:1px;height:16px;background:#d2d0ce;"></div>
<svg class="a" style="left:496.5px;top:71.5px;" width="11" height="11" viewBox="0 0 11 11"><path d="M5 2H1M2.3 0.7L1 2L2.3 3.3" fill="none" stroke="#2b7cd3" stroke-width="0.8"/></svg><span class="t" style="left:502.5px;top:71.2px;font-size:5.5px;line-height:6.6px;color:#444;transform:scaleX(0.981);">0</span><span class="t" style="left:497px;top:76.7px;font-size:5.5px;line-height:6.6px;color:#444;transform:scaleX(1.046);">.00</span>
<svg class="a" style="left:511.5px;top:71.5px;" width="11" height="11" viewBox="0 0 11 11"><path d="M0.5 7.5H4.5M3.2 6.2L4.5 7.5L3.2 8.8" fill="none" stroke="#2b7cd3" stroke-width="0.8"/></svg><span class="t" style="left:514px;top:71.2px;font-size:5.5px;line-height:6.6px;color:#444;transform:scaleX(1.046);">.00</span><span class="t" style="left:518.5px;top:76.7px;font-size:5.5px;line-height:6.6px;color:#444;transform:scaleX(0.981);">0</span>
<span class="t" style="left:460.4px;top:93.5px;font-size:8px;line-height:9.6px;color:#444;transform:scaleX(0.935);">Number</span>
<svg class="a" style="left:520px;top:95.3px;" width="6" height="6" viewBox="0 0 6 6"><path d="M0.5 4V0.5H4M2.5 2.5L5.5 5.5M5.5 3V5.5H3" fill="none" stroke="#666" stroke-width="0.8"/></svg>
<div class="a" style="left:527px;top:44.3px;width:1px;height:55.7px;background:#d2d0ce;"></div>
<svg class="a" style="left:547.9px;top:48.2px;" width="18.5" height="15.5" viewBox="0 0 18.5 15.5"><rect x="0.5" y="0.5" width="17" height="14" fill="#fff" stroke="#555" stroke-width="0.8"/><rect x="3.3" y="0.9" width="10.2" height="4.3" fill="#f4727b"/><rect x="3.3" y="5.2" width="5.7" height="4.4" fill="#6fa8dc"/><rect x="3.3" y="9.6" width="10.2" height="4.5" fill="#f4727b"/><path d="M0.5 5.2H17.5M0.5 9.6H17.5M9 0.5V14.5M13.5 0.5V14.5" stroke="#666" stroke-width="0.6"/><path d="M3.3 0.5V14.5M0.5 14.5H17.5" stroke="#333" stroke-width="0.9"/></svg>
<span class="t" style="left:537.6px;top:68.2px;font-size:8.5px;line-height:10.2px;color:#333;transform:scaleX(0.922);">Conditional</span>
<span class="t" style="left:534.4px;top:78.5px;font-size:8.5px;line-height:10.2px;color:#333;transform:scaleX(0.926);">Formatting</span>
<svg class="a" style="left:574.2px;top:82.4px;" width="5.6" height="4.6" viewBox="0 0 5.6 4.6"><path d="M1 0.9 L2.8 2.52 L4.6 0.9" fill="none" stroke="#555" stroke-width="0.9"/></svg>
<svg class="a" style="left:591.3px;top:48.3px;" width="19" height="16" viewBox="0 0 19 16"><rect x="0.5" y="0.5" width="16" height="13" fill="#fff" stroke="#555" stroke-width="0.9"/><rect x="5.5" y="4.8" width="5.5" height="4.3" fill="#6fa8dc"/><rect x="5.5" y="9.1" width="5.5" height="4.3" fill="#b9d4ee"/><path d="M0.5 4.8H16.5M0.5 9.1H16.5M5.5 0.5V13.5M11 0.5V13.5" stroke="#555" stroke-width="0.7"/><path d="M9 14.5C10.5 14.5 11 13 12 11.5L17.5 5.5L18.5 6.5L13.5 12.5C12.5 14 11.5 15.5 9 14.5Z" fill="#4a90d9" stroke="#2b6cb0" stroke-width="0.5"/></svg>
<span class="t" style="left:583.6px;top:68.2px;font-size:8.5px;line-height:10.2px;color:#333;transform:scaleX(0.857);">Format as</span>
<span class="t" style="left:587.5px;top:78.5px;font-size:8.5px;line-height:10.2px;color:#333;transform:scaleX(0.910);">Table</span>
<svg class="a" style="left:607.7px;top:82.4px;" width="5.6" height="4.6" viewBox="0 0 5.6 4.6"><path d="M1 0.9 L2.8 2.52 L4.6 0.9" fill="none" stroke="#555" stroke-width="0.9"/></svg>
<div class="a" style="left:619.8px;top:45.7px;width:285.2px;height:39.6px;background:#fbfaf9;border:1px solid #dddbd9;box-sizing:border-box;"></div>
<div class="a" style="left:621.5px;top:48.5px;width:66.3px;height:15.4px;background:#fff;box-sizing:border-box;border:1.5px solid #c4c2c0;"></div>
<span class="t" style="left:625px;top:50.9px;font-size:8.5px;line-height:10.2px;color:#222;">Normal</span>
<div class="a" style="left:691.2px;top:49px;width:64.3px;height:14.4px;background:#ffc7ce;"></div>
<span class="t" style="left:694px;top:50.9px;font-size:8.5px;line-height:10.2px;color:#9c0006;transform:scaleX(0.926);">Bad</span>
<div class="a" style="left:759.4px;top:49px;width:64.3px;height:14.4px;background:#c6efce;"></div>
<span class="t" style="left:762px;top:50.9px;font-size:8.5px;line-height:10.2px;color:#2a7a2a;transform:scaleX(1.010);">Good</span>
<div class="a" style="left:827.9px;top:49px;width:65.3px;height:14.4px;background:#ffeb9c;"></div>
<span class="t" style="left:831px;top:50.9px;font-size:8.5px;line-height:10.2px;color:#9c5700;transform:scaleX(1.077);">Neutral</span>
<div class="a" style="left:622px;top:67.9px;width:65.3px;height:13.6px;background:#f2f2f2;box-sizing:border-box;border:1px solid #7f7f7f;"></div>
<span class="t" style="left:625px;top:69.2px;font-size:8.5px;line-height:10.2px;color:#fa7d00;font-weight:bold;transform:scaleX(0.971);">Calculation</span>
<div class="a" style="left:691.2px;top:67.9px;width:64.3px;height:13.6px;background:#a5a5a5;box-sizing:border-box;border:2px solid #6a6a6a;"></div>
<span class="t" style="left:694px;top:69.2px;font-size:8.5px;line-height:10.2px;color:#fff;font-weight:bold;transform:scaleX(0.943);">Check Cell</span>
<span class="t" style="left:762px;top:69.2px;font-size:8.5px;line-height:10.2px;color:#8a8a8a;font-style:italic;transform:scaleX(1.049);">Explanatory ...</span>
<div class="a" style="left:827.9px;top:67.9px;width:65.3px;height:13.6px;background:#ffcc99;box-sizing:border-box;border:1px solid #7f7f7f;"></div>
<span class="t" style="left:831px;top:69.2px;font-size:8.5px;line-height:10.2px;color:#3f3f76;transform:scaleX(1.137);">Input</span>
<div class="a" style="left:895.4px;top:45.7px;width:9.6px;height:13.2px;background:#f3f2f1;box-sizing:border-box;border:1px solid #d6d4d2;"></div>
<div class="a" style="left:895.4px;top:58.9px;width:9.6px;height:13.2px;background:#f3f2f1;box-sizing:border-box;border:1px solid #d6d4d2;"></div>
<div class="a" style="left:895.4px;top:72.1px;width:9.6px;height:13.2px;background:#f3f2f1;box-sizing:border-box;border:1px solid #d6d4d2;"></div>
<svg class="a" style="left:897.6px;top:51px;" width="5.2" height="4.2" viewBox="0 0 5.2 4.2"><path d="M1 0.8 L2.6 2.24 L4.2 0.8" fill="none" stroke="#c0c0c0" stroke-width="0.9"/></svg>
<svg class="a" style="left:897.6px;top:64.7px;" width="5.2" height="4.2" viewBox="0 0 5.2 4.2"><path d="M1 0.8 L2.6 2.24 L4.2 0.8" fill="none" stroke="#444" stroke-width="0.9"/></svg>
<div class="a" style="left:898px;top:77.3px;width:4.6px;height:0.8px;background:#444;"></div>
<svg class="a" style="left:897.6px;top:79px;" width="5.2" height="4.2" viewBox="0 0 5.2 4.2"><path d="M1 0.8 L2.6 2.24 L4.2 0.8" fill="none" stroke="#444" stroke-width="0.9"/></svg>
<span class="t" style="left:709.8px;top:93.5px;font-size:8px;line-height:9.6px;color:#444;transform:scaleX(0.872);">Styles</span>
<div class="a" style="left:911px;top:44.3px;width:1px;height:55.7px;background:#d2d0ce;"></div>
<svg class="a" style="left:919.2px;top:45.1px;" width="24" height="18.5" viewBox="0 0 24 18.5"><g transform="translate(2.5,3.5)"><rect x="0.5" y="0.5" width="17.6" height="13.8" fill="#fff" stroke="#3b3b3b" stroke-width="0.9"/><path d="M0.5 5.1H18.1M0.5 9.7H18.1M6.4 0.5V14.3M12.3 0.5V14.3" stroke="#3b3b3b" stroke-width="0.8"/><rect x="-1.5" y="4.8" width="21" height="4.9" fill="#7db9ee" stroke="#2b7cd3" stroke-width="0.5"/><path d="M12.3 4.8V9.7" stroke="#2b6cb0" stroke-width="0.7"/><path d="M5 7.2H-1M0.8 5.6L-1 7.2L0.8 8.8" fill="none" stroke="#1f62ad" stroke-width="0.9"/></g></svg>
<span class="t" style="left:921px;top:68.4px;font-size:8.5px;line-height:10.2px;color:#333;transform:scaleX(0.884);">Insert</span>
<svg class="a" style="left:927.7px;top:81.5px;" width="5.6" height="4.6" viewBox="0 0 5.6 4.6"><path d="M1 0.9 L2.8 2.52 L4.6 0.9" fill="none" stroke="#555" stroke-width="0.9"/></svg>
<svg class="a" style="left:946.4px;top:45.1px;" width="24" height="18.5" viewBox="0 0 24 18.5"><g transform="translate(2.5,3.5)"><rect x="0.5" y="0.5" width="17.6" height="13.8" fill="#fff" stroke="#3b3b3b" stroke-width="0.9"/><path d="M0.5 5.1H18.1M0.5 9.7H18.1M6.4 0.5V14.3M12.3 0.5V14.3" stroke="#3b3b3b" stroke-width="0.8"/><rect x="2" y="4.8" width="10" height="4.9" fill="#5b9bd5"/><path d="M12 4.2L18.8 11M18.8 4.2L12 11" stroke="#e0454f" stroke-width="1.1"/></g></svg>
<span class="t" style="left:947.5px;top:68.4px;font-size:8.5px;line-height:10.2px;color:#333;transform:scaleX(0.867);">Delete</span>
<svg class="a" style="left:955.2px;top:81.5px;" width="5.6" height="4.6" viewBox="0 0 5.6 4.6"><path d="M1 0.9 L2.8 2.52 L4.6 0.9" fill="none" stroke="#555" stroke-width="0.9"/></svg>
<svg class="a" style="left:973.6px;top:45.1px;" width="24" height="18.5" viewBox="0 0 24 18.5"><g transform="translate(2.5,3.5)"><rect x="0.5" y="0.5" width="17.6" height="13.8" fill="#fff" stroke="#3b3b3b" stroke-width="0.9"/><path d="M0.5 5.1H18.1M0.5 9.7H18.1M6.4 0.5V14.3M12.3 0.5V14.3" stroke="#3b3b3b" stroke-width="0.8"/><path d="M3.5 -2.4H15" stroke="#2b7cd3" stroke-width="0.9"/><rect x="5" y="4.8" width="8.5" height="4.9" fill="#5b9bd5"/></g></svg>
<span class="t" style="left:973.3px;top:68.4px;font-size:8.5px;line-height:10.2px;color:#333;transform:scaleX(0.906);">Format</span>
<svg class="a" style="left:982.6px;top:81.5px;" width="5.6" height="4.6" viewBox="0 0 5.6 4.6"><path d="M1 0.9 L2.8 2.52 L4.6 0.9" fill="none" stroke="#555" stroke-width="0.9"/></svg>
<span class="t" style="left:950.8px;top:93.5px;font-size:8px;line-height:9.6px;color:#444;transform:scaleX(0.832);">Cells</span>
<div class="a" style="left:1003px;top:44.3px;width:1px;height:55.7px;background:#d2d0ce;"></div>
<svg class="a" style="left:1012.8px;top:46.5px;" width="8.5" height="9.5" viewBox="0 0 8.5 9.5"><path d="M7.8 2V0.6H0.8L4.8 4.7L0.8 8.8H7.8V7.4" fill="none" stroke="#444" stroke-width="0.9"/></svg>
<span class="t" style="left:1024.7px;top:45.9px;font-size:8.5px;line-height:10.2px;color:#333;transform:scaleX(0.904);">AutoSum</span>
<svg class="a" style="left:1062.5px;top:49.7px;" width="5.6" height="4.6" viewBox="0 0 5.6 4.6"><path d="M1 0.9 L2.8 2.52 L4.6 0.9" fill="none" stroke="#555" stroke-width="0.9"/></svg>
<svg class="a" style="left:1012px;top:61.5px;" width="11" height="9.5" viewBox="0 0 11 9.5"><rect x="0.5" y="0.5" width="10" height="8.5" fill="#fff" stroke="#444" stroke-width="0.9"/><rect x="3" y="5.5" width="5" height="2.5" fill="#5b9bd5"/><path d="M5.5 1.5V4.5M4.2 3.4L5.5 4.7L6.8 3.4" fill="none" stroke="#2b7cd3" stroke-width="0.8"/></svg>
<span class="t" style="left:1024.7px;top:61.2px;font-size:8.5px;line-height:10.2px;color:#333;transform:scaleX(0.893);">Fill</span>
<svg class="a" style="left:1036px;top:65.4px;" width="5.2" height="4.2" viewBox="0 0 5.2 4.2"><path d="M1 0.8 L2.6 2.24 L4.2 0.8" fill="none" stroke="#555" stroke-width="0.9"/></svg>
<svg class="a" style="left:1012px;top:76px;" width="11" height="10" viewBox="0 0 11 10"><path d="M1 6L6 1L10 5L5.5 9.3H3.5Z" fill="#f6d7ef" stroke="#b04ab0" stroke-width="0.9"/><path d="M3.2 3.8L7.5 8" stroke="#b04ab0" stroke-width="0.8"/></svg>
<span class="t" style="left:1024.7px;top:75.9px;font-size:8.5px;line-height:10.2px;color:#333;transform:scaleX(0.837);">Clear</span>
<svg class="a" style="left:1043.4px;top:80.1px;" width="5.2" height="4.2" viewBox="0 0 5.2 4.2"><path d="M1 0.8 L2.6 2.24 L4.2 0.8" fill="none" stroke="#555" stroke-width="0.9"/></svg>
<span class="t" style="left:1075.3px;top:45.2px;font-size:10px;line-height:12px;color:#2b7cd3;transform:scaleX(1.049);">A</span><span class="t" style="left:1075.8px;top:54px;font-size:10px;line-height:12px;color:#444;transform:scaleX(1.015);">Z</span>
<svg class="a" style="left:1083px;top:50px;" width="12" height="12" viewBox="0 0 12 12"><path d="M1 1.2H10.5L7 5.5V10H4.6V5.5Z" fill="#f3f2f1" stroke="#444" stroke-width="0.9"/></svg>
<span class="t" style="left:1074.6px;top:68.2px;font-size:8.5px;line-height:10.2px;color:#333;transform:scaleX(0.898);">Sort &amp;</span>
<span class="t" style="left:1073px;top:78.5px;font-size:8.5px;line-height:10.2px;color:#333;transform:scaleX(0.900);">Filter</span>
<svg class="a" style="left:1091.4px;top:82.6px;" width="5.2" height="4.2" viewBox="0 0 5.2 4.2"><path d="M1 0.8 L2.6 2.24 L4.2 0.8" fill="none" stroke="#555" stroke-width="0.9"/></svg>
<svg class="a" style="left:1103.5px;top:46.5px;" width="22" height="20" viewBox="0 0 22 20"><circle cx="12.5" cy="7.8" r="6.5" fill="none" stroke="#444" stroke-width="0.9"/><path d="M7.9 12.4L0.7 18.8" stroke="#444" stroke-width="0.9"/></svg>
<span class="t" style="left:1102.9px;top:68.2px;font-size:8.5px;line-height:10.2px;color:#333;transform:scaleX(0.916);">Find &amp;</span>
<span class="t" style="left:1100.6px;top:78.5px;font-size:8.5px;line-height:10.2px;color:#333;transform:scaleX(0.864);">Select</span>
<svg class="a" style="left:1122.4px;top:82.6px;" width="5.2" height="4.2" viewBox="0 0 5.2 4.2"><path d="M1 0.8 L2.6 2.24 L4.2 0.8" fill="none" stroke="#555" stroke-width="0.9"/></svg>
<span class="t" style="left:1057.9px;top:93.5px;font-size:8px;line-height:9.6px;color:#444;transform:scaleX(0.944);">Editing</span>
<div class="a" style="left:1133px;top:44.3px;width:1px;height:55.7px;background:#d2d0ce;"></div>
<svg class="a" style="left:1145px;top:45.5px;" width="16" height="20" viewBox="0 0 16 20"><path d="M7.5 0.8L13.2 0.8L9.3 7H14.5L2.8 18.5L6.3 10H1.2Z" fill="#6db3f2" stroke="#2b7cd3" stroke-width="0.9"/></svg>
<span class="t" style="left:1144.7px;top:68.2px;font-size:8.5px;line-height:10.2px;color:#333;transform:scaleX(0.808);">Ideas</span>
<span class="t" style="left:1144.7px;top:93.5px;font-size:8px;line-height:9.6px;color:#444;transform:scaleX(0.858);">Ideas</span>
<div class="a" style="left:1170px;top:44.3px;width:1px;height:55.7px;background:#d2d0ce;"></div>
<svg class="a" style="left:1189.5px;top:46.5px;" width="16" height="17" viewBox="0 0 16 17"><rect x="1" y="3" width="10" height="13" fill="#ececec" stroke="#c4c4c4" stroke-width="0.8"/><path d="M5 9L12.5 1.5L15 4L7.5 11.5L4.5 12Z" fill="#e2e2e2" stroke="#c0c0c0" stroke-width="0.8"/></svg>
<span class="t" style="left:1179px;top:68.2px;font-size:8.5px;line-height:10.2px;color:#b8b6b4;transform:scaleX(0.870);">Sensitivity</span>
<svg class="a" style="left:1192.7px;top:82.2px;" width="5.6" height="4.6" viewBox="0 0 5.6 4.6"><path d="M1 0.9 L2.8 2.52 L4.6 0.9" fill="none" stroke="#c8c8c8" stroke-width="0.9"/></svg>
<span class="t" style="left:1179px;top:93.5px;font-size:8px;line-height:9.6px;color:#444;transform:scaleX(0.925);">Sensitivity</span>
<div class="a" style="left:1218px;top:44.3px;width:1px;height:55.7px;background:#d2d0ce;"></div>
<svg class="a" style="left:1231.2px;top:96.3px;" width="7" height="5" viewBox="0 0 7 5"><path d="M0.7 4L3.5 1.2L6.3 4" fill="none" stroke="#555" stroke-width="0.9"/></svg>
<div class="a" style="left:3.8px;top:111.8px;width:64.8px;height:15.3px;background:#fff;box-sizing:border-box;border:1px solid #e2e2e2;"></div>
<span class="t" style="left:7.6px;top:114.4px;font-size:9px;line-height:10.8px;color:#444;transform:scaleX(0.899);">B22</span>
<svg class="a" style="left:59.5px;top:118.8px;" width="4" height="2.5" viewBox="0 0 4 2.5"><path d="M0 0 L4 0 L2 2 Z" fill="#666"/></svg>
<div class="a" style="left:79.3px;top:116.5px;width:1px;height:1px;background:#b8b8b8;"></div>
<div class="a" style="left:79.3px;top:119.5px;width:1px;height:1px;background:#b8b8b8;"></div>
<div class="a" style="left:79.3px;top:122.5px;width:1px;height:1px;background:#b8b8b8;"></div>
<div class="a" style="left:89.8px;top:111.8px;width:69.1px;height:15.3px;background:#fff;box-sizing:border-box;border:1px solid #e6e6e6;"></div>
<svg class="a" style="left:97.5px;top:116.5px;" width="6.5" height="6.5" viewBox="0 0 6.5 6.5"><path d="M0.5 0.5L6 6M6 0.5L0.5 6" stroke="#b0b0b0" stroke-width="0.9"/></svg>
<svg class="a" style="left:120.5px;top:116.5px;" width="8" height="6.5" viewBox="0 0 8 6.5"><path d="M0.5 3.5L2.8 6L7.5 0.5" fill="none" stroke="#b0b0b0" stroke-width="0.9"/></svg>
<span class="t" style="left:143.5px;top:114.1px;font-size:9.5px;line-height:11.4px;color:#555;font-style:italic;font-family:'Liberation Serif',serif;">f</span><span class="t" style="left:147px;top:116.8px;font-size:7px;line-height:8.4px;color:#555;font-style:italic;font-family:'Liberation Serif',serif;">x</span>
<div class="a" style="left:162.7px;top:110px;width:1077.9px;height:30.1px;background:#fff;box-sizing:border-box;border:1px solid #e0e0e0;"></div>
<span class="t" style="left:169.5px;top:115px;font-size:8px;line-height:9.6px;color:#444;transform:scaleX(0.955);">24</span>
<svg class="a" style="left:1231.5px;top:116.5px;" width="7" height="5" viewBox="0 0 7 5"><path d="M0.7 4L3.5 1.2L6.3 4" fill="none" stroke="#555" stroke-width="0.9"/></svg>
<div class="a" style="left:0px;top:147px;width:1017.7px;height:519.4px;background:#fff;"></div>
<div class="a" style="left:134px;top:164.4px;width:1px;height:502px;background:#e4e4e4;"></div>
<div class="a" style="left:299px;top:164.4px;width:1px;height:502px;background:#e4e4e4;"></div>
<div class="a" style="left:370px;top:164.4px;width:1px;height:502px;background:#e4e4e4;"></div>
<div class="a" style="left:423px;top:164.4px;width:1px;height:502px;background:#e4e4e4;"></div>
<div class="a" style="left:497px;top:164.4px;width:1px;height:502px;background:#e4e4e4;"></div>
<div class="a" style="left:558px;top:164.4px;width:1px;height:502px;background:#e4e4e4;"></div>
<div class="a" style="left:618px;top:164.4px;width:1px;height:502px;background:#e4e4e4;"></div>
<div class="a" style="left:677.8px;top:164.4px;width:1px;height:502px;background:#e4e4e4;"></div>
<div class="a" style="left:738.3px;top:164.4px;width:1px;height:502px;background:#e4e4e4;"></div>
<div class="a" style="left:798.8px;top:164.4px;width:1px;height:502px;background:#e4e4e4;"></div>
<div class="a" style="left:858.9px;top:164.4px;width:1px;height:502px;background:#e4e4e4;"></div>
<div class="a" style="left:919.1px;top:164.4px;width:1px;height:502px;background:#e4e4e4;"></div>
<div class="a" style="left:979.2px;top:164.4px;width:1px;height:502px;background:#e4e4e4;"></div>
<div class="a" style="left:25.5px;top:197.35px;width:977.7px;height:1px;background:#d9d9d9;"></div>
<div class="a" style="left:25.5px;top:216.08px;width:977.7px;height:1px;background:#d9d9d9;"></div>
<div class="a" style="left:25.5px;top:234.81px;width:977.7px;height:1px;background:#d9d9d9;"></div>
<div class="a" style="left:25.5px;top:253.54px;width:977.7px;height:1px;background:#d9d9d9;"></div>
<div class="a" style="left:25.5px;top:272.27px;width:977.7px;height:1px;background:#d9d9d9;"></div>
<div class="a" style="left:25.5px;top:291px;width:977.7px;height:1px;background:#d9d9d9;"></div>
<div class="a" style="left:25.5px;top:309.73px;width:977.7px;height:1px;background:#d9d9d9;"></div>
<div class="a" style="left:25.5px;top:343.18px;width:977.7px;height:1px;background:#d9d9d9;"></div>
<div class="a" style="left:25.5px;top:361.91px;width:977.7px;height:1px;background:#d9d9d9;"></div>
<div class="a" style="left:25.5px;top:380.64px;width:977.7px;height:1px;background:#d9d9d9;"></div>
<div class="a" style="left:25.5px;top:399.37px;width:977.7px;height:1px;background:#d9d9d9;"></div>
<div class="a" style="left:25.5px;top:418.1px;width:977.7px;height:1px;background:#d9d9d9;"></div>
<div class="a" style="left:25.5px;top:436.83px;width:977.7px;height:1px;background:#d9d9d9;"></div>
<div class="a" style="left:25.5px;top:455.56px;width:977.7px;height:1px;background:#d9d9d9;"></div>
<div class="a" style="left:25.5px;top:474.29px;width:977.7px;height:1px;background:#d9d9d9;"></div>
<div class="a" style="left:25.5px;top:507.74px;width:977.7px;height:1px;background:#d9d9d9;"></div>
<div class="a" style="left:25.5px;top:526.47px;width:977.7px;height:1px;background:#d9d9d9;"></div>
<div class="a" style="left:25.5px;top:545.2px;width:977.7px;height:1px;background:#d9d9d9;"></div>
<div class="a" style="left:25.5px;top:563.93px;width:977.7px;height:1px;background:#d9d9d9;"></div>
<div class="a" style="left:25.5px;top:582.66px;width:977.7px;height:1px;background:#d9d9d9;"></div>
<div class="a" style="left:25.5px;top:601.39px;width:977.7px;height:1px;background:#d9d9d9;"></div>
<div class="a" style="left:25.5px;top:620.12px;width:977.7px;height:1px;background:#d9d9d9;"></div>
<div class="a" style="left:25.5px;top:638.85px;width:977.7px;height:1px;background:#d9d9d9;"></div>
<div class="a" style="left:25.5px;top:657.58px;width:977.7px;height:1px;background:#d9d9d9;"></div>
<div class="a" style="left:26px;top:164.9px;width:273px;height:32.45px;background:#fff;"></div>
<span class="t" style="left:30.5px;top:165.97px;font-size:25.3px;line-height:30.36px;color:#ea1219;font-weight:bold;transform:scaleX(1.009);">Totals by Type</span>
<div class="a" style="left:25.5px;top:197.85px;width:274px;height:18.73px;background:#d9e1f2;"></div>
<div class="a" style="left:25.5px;top:215.88px;width:274px;height:1px;background:#9db4e0;"></div>
<span class="t" style="left:29.1px;top:199.42px;font-size:15px;line-height:18px;color:#111;font-weight:bold;transform:scaleX(0.992);">Row Labels</span>
<span class="t" style="left:137.8px;top:199.42px;font-size:15px;line-height:18px;color:#111;font-weight:bold;transform:scaleX(0.991);">Sum of Median Hours</span>
<div class="a" style="left:123.3px;top:205.45px;width:9.6px;height:9.4px;background:linear-gradient(#fdfdfd,#dcdcdc);border:1px solid #9a9a9a;box-sizing:border-box;"></div>
<svg class="a" style="left:126.1px;top:209.45px;" width="4" height="2.5" viewBox="0 0 4 2.5"><path d="M0 0 L4 0 L2 2 Z" fill="#333"/></svg>
<div class="a" style="left:26px;top:216.08px;width:273px;height:19.73px;background:#fff;"></div>
<span class="t" style="left:28.7px;top:218.14px;font-size:15px;line-height:18px;color:#111;transform:scaleX(0.973);">Asynchronous</span>
<span class="t" style="left:280.96px;top:218.14px;font-size:15px;line-height:18px;color:#111;transform:scaleX(0.985);">11</span>
<div class="a" style="left:26px;top:234.81px;width:273px;height:19.73px;background:#fff;"></div>
<span class="t" style="left:28.7px;top:236.88px;font-size:15px;line-height:18px;color:#111;transform:scaleX(0.973);">Live Events</span>
<span class="t" style="left:279.87px;top:236.88px;font-size:15px;line-height:18px;color:#111;transform:scaleX(0.985);">12</span>
<div class="a" style="left:26px;top:253.54px;width:273px;height:19.73px;background:#fff;"></div>
<span class="t" style="left:28.7px;top:255.6px;font-size:15px;line-height:18px;color:#111;transform:scaleX(0.973);">Outside</span>
<span class="t" style="left:288.08px;top:255.6px;font-size:15px;line-height:18px;color:#111;transform:scaleX(0.985);">1</span>
<div class="a" style="left:25.5px;top:272.77px;width:274px;height:18.73px;background:#d9e1f2;"></div>
<div class="a" style="left:25.5px;top:272.27px;width:274px;height:1px;background:#9db4e0;"></div>
<span class="t" style="left:29.1px;top:274.33px;font-size:15px;line-height:18px;color:#111;font-weight:bold;">Grand Total</span>
<span class="t" style="left:279.62px;top:274.33px;font-size:15px;line-height:18px;color:#111;font-weight:bold;">24</span>
<div class="a" style="left:26px;top:310.73px;width:273px;height:32.45px;background:#fff;"></div>
<span class="t" style="left:30.5px;top:311.8px;font-size:25.3px;line-height:30.36px;color:#ea1219;font-weight:bold;">Totals by Month</span>
<div class="a" style="left:25.5px;top:343.68px;width:274px;height:18.73px;background:#d9e1f2;"></div>
<div class="a" style="left:25.5px;top:361.71px;width:274px;height:1px;background:#9db4e0;"></div>
<span class="t" style="left:29.1px;top:345.25px;font-size:15px;line-height:18px;color:#111;font-weight:bold;transform:scaleX(0.992);">Row Labels</span>
<span class="t" style="left:137.8px;top:345.25px;font-size:15px;line-height:18px;color:#111;font-weight:bold;transform:scaleX(0.991);">Sum of Median Hours</span>
<div class="a" style="left:123.3px;top:351.28px;width:9.6px;height:9.4px;background:linear-gradient(#fdfdfd,#dcdcdc);border:1px solid #9a9a9a;box-sizing:border-box;"></div>
<svg class="a" style="left:126.1px;top:355.28px;" width="4" height="2.5" viewBox="0 0 4 2.5"><path d="M0 0 L4 0 L2 2 Z" fill="#333"/></svg>
<div class="a" style="left:26px;top:361.91px;width:273px;height:19.73px;background:#fff;"></div>
<span class="t" style="left:28.7px;top:363.98px;font-size:15px;line-height:18px;color:#111;transform:scaleX(0.973);">January 2021</span>
<span class="t" style="left:279.87px;top:363.98px;font-size:15px;line-height:18px;color:#111;transform:scaleX(0.985);">12</span>
<div class="a" style="left:26px;top:380.64px;width:273px;height:19.73px;background:#fff;"></div>
<span class="t" style="left:28.7px;top:382.71px;font-size:15px;line-height:18px;color:#111;transform:scaleX(0.973);">February 2021</span>
<span class="t" style="left:288.08px;top:382.71px;font-size:15px;line-height:18px;color:#111;transform:scaleX(0.985);">8</span>
<div class="a" style="left:26px;top:399.37px;width:273px;height:19.73px;background:#fff;"></div>
<span class="t" style="left:28.7px;top:401.44px;font-size:15px;line-height:18px;color:#111;transform:scaleX(0.973);">April 2021</span>
<span class="t" style="left:288.08px;top:401.44px;font-size:15px;line-height:18px;color:#111;transform:scaleX(0.985);">3</span>
<div class="a" style="left:26px;top:418.1px;width:273px;height:19.73px;background:#fff;"></div>
<span class="t" style="left:28.7px;top:420.17px;font-size:15px;line-height:18px;color:#111;transform:scaleX(0.973);">March 2021</span>
<span class="t" style="left:288.08px;top:420.17px;font-size:15px;line-height:18px;color:#111;transform:scaleX(0.985);">1</span>
<div class="a" style="left:25.5px;top:437.33px;width:274px;height:18.73px;background:#d9e1f2;"></div>
<div class="a" style="left:25.5px;top:436.83px;width:274px;height:1px;background:#9db4e0;"></div>
<span class="t" style="left:29.1px;top:438.9px;font-size:15px;line-height:18px;color:#111;font-weight:bold;">Grand Total</span>
<span class="t" style="left:279.62px;top:438.9px;font-size:15px;line-height:18px;color:#111;font-weight:bold;">24</span>
<div class="a" style="left:26px;top:475.29px;width:273px;height:32.45px;background:#fff;"></div>
<span class="t" style="left:30.5px;top:476.36px;font-size:25.3px;line-height:30.36px;color:#ea1219;font-weight:bold;">Totals by Competency</span>
<div class="a" style="left:25.5px;top:508.24px;width:274px;height:18.73px;background:#d9e1f2;"></div>
<div class="a" style="left:25.5px;top:526.27px;width:274px;height:1px;background:#9db4e0;"></div>
<span class="t" style="left:29.1px;top:509.81px;font-size:15px;line-height:18px;color:#111;font-weight:bold;transform:scaleX(0.992);">Row Labels</span>
<span class="t" style="left:137.8px;top:509.81px;font-size:15px;line-height:18px;color:#111;font-weight:bold;transform:scaleX(0.991);">Sum of Median Hours</span>
<div class="a" style="left:123.3px;top:515.84px;width:9.6px;height:9.4px;background:linear-gradient(#fdfdfd,#dcdcdc);border:1px solid #9a9a9a;box-sizing:border-box;"></div>
<svg class="a" style="left:126.1px;top:519.84px;" width="4" height="2.5" viewBox="0 0 4 2.5"><path d="M0 0 L4 0 L2 2 Z" fill="#333"/></svg>
<div class="a" style="left:26px;top:526.47px;width:273px;height:19.73px;background:#fff;"></div>
<span class="t" style="left:28.7px;top:528.54px;font-size:15px;line-height:18px;color:#111;transform:scaleX(0.973);">Process</span>
<span class="t" style="left:288.08px;top:528.54px;font-size:15px;line-height:18px;color:#111;transform:scaleX(0.985);">1</span>
<div class="a" style="left:26px;top:545.2px;width:273px;height:19.73px;background:#fff;"></div>
<span class="t" style="left:28.7px;top:547.27px;font-size:15px;line-height:18px;color:#111;transform:scaleX(0.973);">Product</span>
<span class="t" style="left:288.08px;top:547.27px;font-size:15px;line-height:18px;color:#111;transform:scaleX(0.985);">3</span>
<div class="a" style="left:26px;top:563.93px;width:273px;height:19.73px;background:#fff;"></div>
<span class="t" style="left:28.7px;top:566px;font-size:15px;line-height:18px;color:#111;transform:scaleX(0.973);">Selling</span>
<span class="t" style="left:279.87px;top:566px;font-size:15px;line-height:18px;color:#111;transform:scaleX(0.985);">12</span>
<div class="a" style="left:26px;top:582.66px;width:273px;height:19.73px;background:#fff;"></div>
<span class="t" style="left:28.7px;top:584.73px;font-size:15px;line-height:18px;color:#111;transform:scaleX(0.973);">Soft Skills</span>
<span class="t" style="left:288.08px;top:584.73px;font-size:15px;line-height:18px;color:#111;transform:scaleX(0.985);">8</span>
<div class="a" style="left:25.5px;top:601.89px;width:274px;height:18.73px;background:#d9e1f2;"></div>
<div class="a" style="left:25.5px;top:601.39px;width:274px;height:1px;background:#9db4e0;"></div>
<span class="t" style="left:29.1px;top:603.46px;font-size:15px;line-height:18px;color:#111;font-weight:bold;">Grand Total</span>
<span class="t" style="left:279.62px;top:603.46px;font-size:15px;line-height:18px;color:#111;font-weight:bold;">24</span>
<div class="a" style="left:0px;top:147px;width:1003.2px;height:17.4px;background:#e6e6e6;"></div>
<div class="a" style="left:0px;top:147px;width:25.5px;height:519.4px;background:#e6e6e6;"></div>
<svg class="a" style="left:13px;top:150.4px;" width="12" height="13" viewBox="0 0 12 13"><path d="M11.6 0.3V12.6H0.3Z" fill="#b4b4b4"/></svg>
<span class="t" style="left:76.19px;top:148.82px;font-size:12.3px;line-height:14.76px;color:#505050;transform:scaleX(0.930);">A</span>
<div class="a" style="left:134px;top:149px;width:1px;height:15.4px;background:#c6c6c6;"></div>
<div class="a" style="left:134.5px;top:147px;width:165px;height:17.4px;background:#d2d2d2;border-bottom:1.4px solid #217346;box-sizing:border-box;"></div>
<span class="t" style="left:213.19px;top:148.82px;font-size:12.3px;line-height:14.76px;color:#217346;transform:scaleX(0.930);">B</span>
<div class="a" style="left:299px;top:149px;width:1px;height:15.4px;background:#c6c6c6;"></div>
<span class="t" style="left:330.87px;top:148.82px;font-size:12.3px;line-height:14.76px;color:#505050;transform:scaleX(0.930);">C</span>
<div class="a" style="left:370px;top:149px;width:1px;height:15.4px;background:#c6c6c6;"></div>
<span class="t" style="left:392.87px;top:148.82px;font-size:12.3px;line-height:14.76px;color:#505050;transform:scaleX(0.930);">D</span>
<div class="a" style="left:423px;top:149px;width:1px;height:15.4px;background:#c6c6c6;"></div>
<span class="t" style="left:456.69px;top:148.82px;font-size:12.3px;line-height:14.76px;color:#505050;transform:scaleX(0.930);">E</span>
<div class="a" style="left:497px;top:149px;width:1px;height:15.4px;background:#c6c6c6;"></div>
<span class="t" style="left:524.51px;top:148.82px;font-size:12.3px;line-height:14.76px;color:#505050;transform:scaleX(0.930);">F</span>
<div class="a" style="left:558px;top:149px;width:1px;height:15.4px;background:#c6c6c6;"></div>
<span class="t" style="left:584.05px;top:148.82px;font-size:12.3px;line-height:14.76px;color:#505050;transform:scaleX(0.930);">G</span>
<div class="a" style="left:618px;top:149px;width:1px;height:15.4px;background:#c6c6c6;"></div>
<span class="t" style="left:644.27px;top:148.82px;font-size:12.3px;line-height:14.76px;color:#505050;transform:scaleX(0.930);">H</span>
<div class="a" style="left:677.8px;top:149px;width:1px;height:15.4px;background:#c6c6c6;"></div>
<span class="t" style="left:706.96px;top:148.82px;font-size:12.3px;line-height:14.76px;color:#505050;transform:scaleX(0.930);">I</span>
<div class="a" style="left:738.3px;top:149px;width:1px;height:15.4px;background:#c6c6c6;"></div>
<span class="t" style="left:766.19px;top:148.82px;font-size:12.3px;line-height:14.76px;color:#505050;transform:scaleX(0.930);">J</span>
<div class="a" style="left:798.8px;top:149px;width:1px;height:15.4px;background:#c6c6c6;"></div>
<span class="t" style="left:825.54px;top:148.82px;font-size:12.3px;line-height:14.76px;color:#505050;transform:scaleX(0.930);">K</span>
<div class="a" style="left:858.9px;top:149px;width:1px;height:15.4px;background:#c6c6c6;"></div>
<span class="t" style="left:886.32px;top:148.82px;font-size:12.3px;line-height:14.76px;color:#505050;transform:scaleX(0.930);">L</span>
<div class="a" style="left:919.1px;top:149px;width:1px;height:15.4px;background:#c6c6c6;"></div>
<span class="t" style="left:944.89px;top:148.82px;font-size:12.3px;line-height:14.76px;color:#505050;transform:scaleX(0.930);">M</span>
<div class="a" style="left:979.2px;top:149px;width:1px;height:15.4px;background:#c6c6c6;"></div>
<div class="a" style="left:1002.7px;top:149px;width:1px;height:15.4px;background:#c6c6c6;"></div>
<span class="t" style="left:9.87px;top:179.94px;font-size:12.3px;line-height:14.76px;color:#505050;transform:scaleX(0.930);">1</span>
<div class="a" style="left:0px;top:197.35px;width:25.5px;height:1px;background:#c6c6c6;"></div>
<span class="t" style="left:9.87px;top:203.07px;font-size:12.3px;line-height:14.76px;color:#505050;transform:scaleX(0.930);">2</span>
<div class="a" style="left:0px;top:216.08px;width:25.5px;height:1px;background:#c6c6c6;"></div>
<span class="t" style="left:9.87px;top:221.8px;font-size:12.3px;line-height:14.76px;color:#505050;transform:scaleX(0.930);">3</span>
<div class="a" style="left:0px;top:234.81px;width:25.5px;height:1px;background:#c6c6c6;"></div>
<span class="t" style="left:9.87px;top:240.53px;font-size:12.3px;line-height:14.76px;color:#505050;transform:scaleX(0.930);">4</span>
<div class="a" style="left:0px;top:253.54px;width:25.5px;height:1px;background:#c6c6c6;"></div>
<span class="t" style="left:9.87px;top:259.26px;font-size:12.3px;line-height:14.76px;color:#505050;transform:scaleX(0.930);">5</span>
<div class="a" style="left:0px;top:272.27px;width:25.5px;height:1px;background:#c6c6c6;"></div>
<span class="t" style="left:9.87px;top:277.99px;font-size:12.3px;line-height:14.76px;color:#505050;transform:scaleX(0.930);">6</span>
<div class="a" style="left:0px;top:291px;width:25.5px;height:1px;background:#c6c6c6;"></div>
<span class="t" style="left:9.87px;top:296.72px;font-size:12.3px;line-height:14.76px;color:#505050;transform:scaleX(0.930);">7</span>
<div class="a" style="left:0px;top:309.73px;width:25.5px;height:1px;background:#c6c6c6;"></div>
<span class="t" style="left:9.87px;top:325.77px;font-size:12.3px;line-height:14.76px;color:#505050;transform:scaleX(0.930);">8</span>
<div class="a" style="left:0px;top:343.18px;width:25.5px;height:1px;background:#c6c6c6;"></div>
<span class="t" style="left:9.87px;top:348.9px;font-size:12.3px;line-height:14.76px;color:#505050;transform:scaleX(0.930);">9</span>
<div class="a" style="left:0px;top:361.91px;width:25.5px;height:1px;background:#c6c6c6;"></div>
<span class="t" style="left:6.69px;top:367.63px;font-size:12.3px;line-height:14.76px;color:#505050;transform:scaleX(0.930);">10</span>
<div class="a" style="left:0px;top:380.64px;width:25.5px;height:1px;background:#c6c6c6;"></div>
<span class="t" style="left:7.11px;top:386.36px;font-size:12.3px;line-height:14.76px;color:#505050;transform:scaleX(0.930);">11</span>
<div class="a" style="left:0px;top:399.37px;width:25.5px;height:1px;background:#c6c6c6;"></div>
<span class="t" style="left:6.69px;top:405.09px;font-size:12.3px;line-height:14.76px;color:#505050;transform:scaleX(0.930);">12</span>
<div class="a" style="left:0px;top:418.1px;width:25.5px;height:1px;background:#c6c6c6;"></div>
<span class="t" style="left:6.69px;top:423.82px;font-size:12.3px;line-height:14.76px;color:#505050;transform:scaleX(0.930);">13</span>
<div class="a" style="left:0px;top:436.83px;width:25.5px;height:1px;background:#c6c6c6;"></div>
<span class="t" style="left:6.69px;top:442.55px;font-size:12.3px;line-height:14.76px;color:#505050;transform:scaleX(0.930);">14</span>
<div class="a" style="left:0px;top:455.56px;width:25.5px;height:1px;background:#c6c6c6;"></div>
<span class="t" style="left:6.69px;top:461.28px;font-size:12.3px;line-height:14.76px;color:#505050;transform:scaleX(0.930);">15</span>
<div class="a" style="left:0px;top:474.29px;width:25.5px;height:1px;background:#c6c6c6;"></div>
<span class="t" style="left:6.69px;top:490.33px;font-size:12.3px;line-height:14.76px;color:#505050;transform:scaleX(0.930);">16</span>
<div class="a" style="left:0px;top:507.74px;width:25.5px;height:1px;background:#c6c6c6;"></div>
<span class="t" style="left:6.69px;top:513.46px;font-size:12.3px;line-height:14.76px;color:#505050;transform:scaleX(0.930);">17</span>
<div class="a" style="left:0px;top:526.47px;width:25.5px;height:1px;background:#c6c6c6;"></div>
<span class="t" style="left:6.69px;top:532.19px;font-size:12.3px;line-height:14.76px;color:#505050;transform:scaleX(0.930);">18</span>
<div class="a" style="left:0px;top:545.2px;width:25.5px;height:1px;background:#c6c6c6;"></div>
<span class="t" style="left:6.69px;top:550.92px;font-size:12.3px;line-height:14.76px;color:#505050;transform:scaleX(0.930);">19</span>
<div class="a" style="left:0px;top:563.93px;width:25.5px;height:1px;background:#c6c6c6;"></div>
<span class="t" style="left:6.69px;top:569.65px;font-size:12.3px;line-height:14.76px;color:#505050;transform:scaleX(0.930);">20</span>
<div class="a" style="left:0px;top:582.66px;width:25.5px;height:1px;background:#c6c6c6;"></div>
<span class="t" style="left:6.69px;top:588.38px;font-size:12.3px;line-height:14.76px;color:#505050;transform:scaleX(0.930);">21</span>
<div class="a" style="left:0px;top:601.39px;width:25.5px;height:1px;background:#c6c6c6;"></div>
<div class="a" style="left:0px;top:601.89px;width:25.5px;height:18.73px;background:#d2d2d2;border-right:1.4px solid #217346;box-sizing:border-box;"></div>
<span class="t" style="left:6.69px;top:607.11px;font-size:12.3px;line-height:14.76px;color:#217346;transform:scaleX(0.930);">22</span>
<div class="a" style="left:0px;top:620.12px;width:25.5px;height:1px;background:#c6c6c6;"></div>
<span class="t" style="left:6.69px;top:625.84px;font-size:12.3px;line-height:14.76px;color:#505050;transform:scaleX(0.930);">23</span>
<div class="a" style="left:0px;top:638.85px;width:25.5px;height:1px;background:#c6c6c6;"></div>
<span class="t" style="left:6.69px;top:644.57px;font-size:12.3px;line-height:14.76px;color:#505050;transform:scaleX(0.930);">24</span>
<div class="a" style="left:0px;top:657.58px;width:25.5px;height:1px;background:#c6c6c6;"></div>
<div class="a" style="left:0px;top:658.08px;width:25.5px;height:8.32px;overflow:hidden;"><span class="t" style="left:6.21px;top:5.22px;font-size:12.3px;line-height:14.76px;color:#444;">25</span></div>
<div class="a" style="left:25px;top:147px;width:1px;height:519.4px;background:#bdbdbd;"></div>
<div class="a" style="left:0px;top:163.9px;width:1003.2px;height:1px;background:#bdbdbd;"></div>
<div class="a" style="left:133.5px;top:600.89px;width:167px;height:20.73px;border:2px solid #217346;box-sizing:border-box;"></div>
<div class="a" style="left:297px;top:618.12px;width:4.5px;height:4.5px;background:#217346;border:1px solid #fff;box-sizing:border-box;"></div>
<div class="a" style="left:1003.2px;top:147px;width:14.5px;height:519.4px;background:#fff;"></div>
<div class="a" style="left:1004.6px;top:147px;width:11.6px;height:519.4px;background:#e6e6e6;"></div>
<div class="a" style="left:1005.4px;top:148px;width:10px;height:10.5px;background:#fff;border:1px solid #c8c8c8;box-sizing:border-box;"></div>
<svg class="a" style="left:1008.2px;top:151.8px;" width="4.4" height="2.6" viewBox="0 0 4.4 2.6"><path d="M0 2.6L2.2 0L4.4 2.6Z" fill="#555"/></svg>
<div class="a" style="left:1005.4px;top:159.5px;width:10px;height:496px;background:#d6d6d6;"></div>
<div class="a" style="left:1005.4px;top:159.5px;width:10px;height:476px;background:#fff;border:1px solid #c8c8c8;box-sizing:border-box;"></div>
<div class="a" style="left:1005.4px;top:656px;width:10px;height:10px;background:#fff;border:1px solid #c8c8c8;box-sizing:border-box;"></div>
<svg class="a" style="left:1008.2px;top:660px;" width="4.4" height="2.6" viewBox="0 0 4.4 2.6"><path d="M0 0L2.2 2.6L4.4 0Z" fill="#555"/></svg>
<div class="a" style="left:0px;top:666.4px;width:1017.7px;height:18.6px;background:#e6e6e6;border-top:1px solid #c6c6c6;box-sizing:border-box;"></div>
<svg class="a" style="left:16.9px;top:675.2px;" width="3.2" height="2.1" viewBox="0 0 3.2 2.1"><path d="M0 0 L3.2 0 L1.6 1.6 Z" fill="#c8c8c8"/></svg><svg class="a" style="left:35.4px;top:675.2px;" width="3.2" height="2.1" viewBox="0 0 3.2 2.1"><path d="M0 0 L3.2 0 L1.6 1.6 Z" fill="#c8c8c8"/></svg>
<div class="a" style="left:65.4px;top:668.9px;width:1px;height:14px;background:#b0b0b0;"></div>
<span class="t" style="left:73.8px;top:671.1px;font-size:8.5px;line-height:10.2px;color:#555;">Audit Log</span>
<div class="a" style="left:120.4px;top:666.4px;width:60.2px;height:17.2px;background:#fff;border-bottom:2px solid #217346;box-sizing:border-box;border-right:1px solid #c6c6c6;border-left:1px solid #c6c6c6;"></div>
<span class="t" style="left:128.1px;top:671.1px;font-size:8.5px;line-height:10.2px;color:#217346;font-weight:bold;transform:scaleX(0.949);">Aggregates</span>
<svg class="a" style="left:201.8px;top:670.7px;" width="11" height="11" viewBox="0 0 11 11"><circle cx="5.5" cy="5.5" r="4.8" fill="none" stroke="#777" stroke-width="0.8"/><path d="M5.5 2.8V8.2M2.8 5.5H8.2" stroke="#777" stroke-width="0.8"/></svg>
<div class="a" style="left:610.3px;top:673px;width:1px;height:1px;background:#999;"></div>
<div class="a" style="left:610.3px;top:676px;width:1px;height:1px;background:#999;"></div>
<div class="a" style="left:610.3px;top:679px;width:1px;height:1px;background:#999;"></div>
<div class="a" style="left:621px;top:672px;width:10px;height:9.6px;background:#fff;border:1px solid #c8c8c8;box-sizing:border-box;"></div>
<svg class="a" style="left:624.5px;top:674.6px;" width="2.6" height="4.4" viewBox="0 0 2.6 4.4"><path d="M2.6 0L0 2.2L2.6 4.4Z" fill="#555"/></svg>
<div class="a" style="left:631.7px;top:672px;width:333px;height:9.6px;background:#fff;border:1px solid #c8c8c8;box-sizing:border-box;"></div>
<div class="a" style="left:964.7px;top:672px;width:28.5px;height:9.6px;background:#d8d8d8;"></div>
<div class="a" style="left:993.2px;top:672px;width:10px;height:9.6px;background:#fff;border:1px solid #c8c8c8;box-sizing:border-box;"></div>
<svg class="a" style="left:997px;top:674.6px;" width="2.6" height="4.4" viewBox="0 0 2.6 4.4"><path d="M0 0L2.6 2.2L0 4.4Z" fill="#555"/></svg>
<div class="a" style="left:1017.7px;top:147px;width:226.3px;height:538px;background:#e6e6e6;border-left:1px solid #cfcfcf;box-sizing:border-box;"></div>
<span class="t" style="left:1026.7px;top:156.88px;font-size:14.2px;line-height:17.04px;color:#2f7d55;transform:scaleX(0.920);">PivotTable Fields</span>
<svg class="a" style="left:1198.8px;top:161.2px;" width="4.4" height="2.7" viewBox="0 0 4.4 2.7"><path d="M0 0 L4.4 0 L2.2 2.2 Z" fill="#555"/></svg>
<svg class="a" style="left:1225.2px;top:159px;" width="6.5" height="6.5" viewBox="0 0 6.5 6.5"><path d="M0.5 0.5L6 6M6 0.5L0.5 6" stroke="#444" stroke-width="0.9"/></svg>
<span class="t" style="left:1026.7px;top:182px;font-size:8px;line-height:9.6px;color:#444;transform:scaleX(0.951);">Choose fields to add to report:</span>
<div class="a" style="left:1206.5px;top:177.6px;width:28.3px;height:17.4px;background:#fff;border:1px solid #d0d0d0;box-sizing:border-box;"></div>
<svg class="a" style="left:1212.5px;top:181.5px;" width="10" height="10" viewBox="0 0 10 10"><circle cx="5" cy="5" r="3.9" fill="none" stroke="#444" stroke-width="1.1" stroke-dasharray="1.7 1.35"/><circle cx="5" cy="5" r="3" fill="none" stroke="#444" stroke-width="0.8"/><circle cx="5" cy="5" r="1.2" fill="none" stroke="#444" stroke-width="0.7"/></svg>
<svg class="a" style="left:1227.3px;top:185.65px;" width="3.4" height="2.2" viewBox="0 0 3.4 2.2"><path d="M0 0 L3.4 0 L1.7 1.7 Z" fill="#555"/></svg>
<div class="a" style="left:1025.7px;top:204px;width:209.1px;height:12.3px;background:#fff;border:1px solid #c4c4c4;box-sizing:border-box;"></div>
<span class="t" style="left:1027.3px;top:204.9px;font-size:7.5px;line-height:9px;color:#555;transform:scaleX(0.909);">Search</span>
<svg class="a" style="left:1224px;top:205.8px;" width="9" height="9" viewBox="0 0 9 9"><circle cx="5.5" cy="3.5" r="2.8" fill="none" stroke="#555" stroke-width="0.8"/><path d="M3.5 5.6L0.8 8.3" stroke="#555" stroke-width="0.8"/></svg>
<div class="a" style="left:1025.7px;top:227px;width:209.1px;height:188.6px;background:#fff;"></div>
<div class="a" style="left:1027.2px;top:227.6px;width:8px;height:8px;background:#fff;border:1px solid #8a8a8a;box-sizing:border-box;"></div>
<span class="t" style="left:1039.5px;top:227.8px;font-size:8px;line-height:9.6px;color:#333;transform:scaleX(0.948);">Enablement Type</span>
<div class="a" style="left:1027.2px;top:239.7px;width:8px;height:8px;background:#fff;border:1px solid #8a8a8a;box-sizing:border-box;"></div>
<span class="t" style="left:1039.5px;top:239.9px;font-size:8px;line-height:9.6px;color:#333;transform:scaleX(0.957);">Enablement Name</span>
<div class="a" style="left:1027.2px;top:251.3px;width:8px;height:8px;background:#fff;border:1px solid #8a8a8a;box-sizing:border-box;"></div>
<span class="t" style="left:1039.5px;top:251.5px;font-size:8px;line-height:9.6px;color:#333;transform:scaleX(1.012);">Month</span>
<div class="a" style="left:1027.2px;top:264.5px;width:8px;height:8px;background:#fff;border:1px solid #8a8a8a;box-sizing:border-box;"></div>
<svg class="a" style="left:1028.2px;top:265.5px;" width="6" height="6" viewBox="0 0 6 6"><path d="M0.8 3.2L2.4 4.9L5.3 0.8" fill="none" stroke="#333" stroke-width="0.9"/></svg>
<span class="t" style="left:1039.5px;top:264.7px;font-size:8px;line-height:9.6px;color:#222;font-weight:bold;transform:scaleX(0.931);">Competency</span>
<div class="a" style="left:1027.2px;top:276.6px;width:8px;height:8px;background:#fff;border:1px solid #8a8a8a;box-sizing:border-box;"></div>
<span class="t" style="left:1039.5px;top:276.8px;font-size:8px;line-height:9.6px;color:#333;transform:scaleX(0.887);">Business Dev</span>
<div class="a" style="left:1027.2px;top:288.2px;width:8px;height:8px;background:#fff;border:1px solid #8a8a8a;box-sizing:border-box;"></div>
<span class="t" style="left:1039.5px;top:288.4px;font-size:8px;line-height:9.6px;color:#333;transform:scaleX(0.841);">Sales Execs</span>
<div class="a" style="left:1027.2px;top:300.9px;width:8px;height:8px;background:#fff;border:1px solid #8a8a8a;box-sizing:border-box;"></div>
<span class="t" style="left:1039.5px;top:301.1px;font-size:8px;line-height:9.6px;color:#333;transform:scaleX(0.901);">Sales Managers</span>
<div class="a" style="left:1027.2px;top:313.8px;width:8px;height:8px;background:#fff;border:1px solid #8a8a8a;box-sizing:border-box;"></div>
<span class="t" style="left:1039.5px;top:314px;font-size:8px;line-height:9.6px;color:#333;transform:scaleX(0.944);">Solution Engineers</span>
<div class="a" style="left:1027.2px;top:325.1px;width:8px;height:8px;background:#fff;border:1px solid #8a8a8a;box-sizing:border-box;"></div>
<svg class="a" style="left:1028.2px;top:326.1px;" width="6" height="6" viewBox="0 0 6 6"><path d="M0.8 3.2L2.4 4.9L5.3 0.8" fill="none" stroke="#333" stroke-width="0.9"/></svg>
<span class="t" style="left:1039.5px;top:325.3px;font-size:8px;line-height:9.6px;color:#222;font-weight:bold;transform:scaleX(0.936);">Median Hours</span>
<span class="t" style="left:1027px;top:344px;font-size:8px;line-height:9.6px;color:#444;transform:scaleX(0.938);">More Tables...</span>
<span class="t" style="left:1028.3px;top:430.6px;font-size:8px;line-height:9.6px;color:#444;transform:scaleX(0.938);">Drag fields between areas below:</span>
<svg class="a" style="left:1029.5px;top:452.3px;" width="7.5" height="7" viewBox="0 0 7.5 7"><path d="M0.3 0.5H7.2L4.6 3.3V6.5H2.9V3.3Z" fill="#777"/></svg>
<span class="t" style="left:1042.4px;top:451.8px;font-size:8px;line-height:9.6px;color:#444;transform:scaleX(0.932);">Filters</span>
<svg class="a" style="left:1135.3px;top:452.3px;" width="7" height="7" viewBox="0 0 7 7"><path d="M1 0V7M3.5 0V7M6 0V7" stroke="#888" stroke-width="1.2"/><path d="M0.4 0V7" stroke="#555" stroke-width="0.8"/></svg>
<span class="t" style="left:1147.6px;top:451.8px;font-size:8px;line-height:9.6px;color:#444;transform:scaleX(0.979);">Columns</span>
<div class="a" style="left:1028px;top:463.7px;width:98.7px;height:82.3px;background:#fff;"></div>
<div class="a" style="left:1132.5px;top:463.7px;width:102.3px;height:82.3px;background:#fff;"></div>
<div class="a" style="left:1028px;top:550px;width:206.8px;height:1px;background:#c8c8c8;"></div>
<svg class="a" style="left:1030px;top:556.5px;" width="7" height="6" viewBox="0 0 7 6"><path d="M0 0.6H7M0 3H7M0 5.4H7" stroke="#888" stroke-width="1.1"/></svg>
<span class="t" style="left:1042.4px;top:555.8px;font-size:8px;line-height:9.6px;color:#444;transform:scaleX(0.900);">Rows</span>
<span class="t" style="left:1135.5px;top:555.5px;font-size:8.5px;line-height:10.2px;color:#666;">Σ</span>
<span class="t" style="left:1147.6px;top:555.8px;font-size:8px;line-height:9.6px;color:#444;transform:scaleX(0.918);">Values</span>
<div class="a" style="left:1028px;top:568.5px;width:98.7px;height:82.7px;background:#fff;"></div>
<div class="a" style="left:1132.5px;top:568.5px;width:102.3px;height:82.7px;background:#fff;"></div>
<div class="a" style="left:1029px;top:569px;width:96.4px;height:12.4px;background:#fff;border:1px solid #c2c2c2;box-sizing:border-box;"></div>
<span class="t" style="left:1032.8px;top:571.4px;font-size:8px;line-height:9.6px;color:#333;transform:scaleX(0.973);">Competency</span>
<svg class="a" style="left:1115.6px;top:574.5px;" width="3.6" height="2.3" viewBox="0 0 3.6 2.3"><path d="M0 0 L3.6 0 L1.8 1.8 Z" fill="#555"/></svg>
<div class="a" style="left:1133.5px;top:569px;width:99.5px;height:12.4px;background:#fff;border:1px solid #c2c2c2;box-sizing:border-box;"></div>
<span class="t" style="left:1137.6px;top:571.4px;font-size:8px;line-height:9.6px;color:#333;transform:scaleX(0.973);">Sum of Median Hours</span>
<svg class="a" style="left:1224px;top:574.5px;" width="3.6" height="2.3" viewBox="0 0 3.6 2.3"><path d="M0 0 L3.6 0 L1.8 1.8 Z" fill="#555"/></svg>
<div class="a" style="left:1028px;top:667px;width:7.6px;height:8px;background:#fff;border:1px solid #8a8a8a;box-sizing:border-box;"></div>
<span class="t" style="left:1039.9px;top:667.2px;font-size:8px;line-height:9.6px;color:#333;transform:scaleX(0.950);">Defer Layout Update</span>
<div class="a" style="left:1204px;top:665px;width:30.8px;height:13px;background:#fafafa;border:1px solid #e0e0e0;box-sizing:border-box;"></div>
<span class="t" style="left:1207.4px;top:667.5px;font-size:8px;line-height:9.6px;color:#b0b0b0;transform:scaleX(0.938);">Update</span>
<div class="a" style="left:0px;top:685px;width:1244px;height:14px;background:#f3f2f1;border-top:1px solid #d0d0d0;box-sizing:border-box;"></div>
<svg class="a" style="left:5px;top:687.5px;" width="9.5" height="9" viewBox="0 0 9.5 9"><rect x="0.5" y="0.5" width="8" height="6.5" fill="none" stroke="#555" stroke-width="0.8"/><path d="M0.5 2.5H8.5" stroke="#555" stroke-width="0.8"/><circle cx="6.5" cy="6.5" r="2" fill="#f3f2f1" stroke="#555" stroke-width="0.7"/></svg>
<div class="a" style="left:0px;top:697.8px;width:1244px;height:1.2px;background:#505050;"></div>
<div class="a" style="left:1049.8px;top:686px;width:25.7px;height:12px;background:#cfcfcf;"></div>
<svg class="a" style="left:1057.5px;top:687.8px;" width="9.5" height="9.5" viewBox="0 0 9.5 9.5"><rect x="0.5" y="0.5" width="8.5" height="8.5" fill="none" stroke="#333" stroke-width="0.9"/><path d="M0.5 3.3H9M0.5 6.2H9M3.3 0.5V9M6.2 0.5V9" stroke="#333" stroke-width="0.8"/></svg>
<svg class="a" style="left:1084px;top:687.8px;" width="9.5" height="9.5" viewBox="0 0 9.5 9.5"><rect x="0.5" y="0.5" width="8.5" height="8.5" fill="none" stroke="#444" stroke-width="0.9"/><rect x="2.5" y="2.5" width="4.5" height="4.5" fill="none" stroke="#444" stroke-width="0.8"/></svg>
<svg class="a" style="left:1109.5px;top:687.8px;" width="9.5" height="9.5" viewBox="0 0 9.5 9.5"><path d="M0.5 0.5V9H9V0.5M3.3 0.5V6H6.2V0.5" fill="none" stroke="#444" stroke-width="0.9"/></svg>
<div class="a" style="left:1131px;top:692.3px;width:5px;height:1px;background:#888;"></div>
<div class="a" style="left:1140px;top:692.3px;width:64px;height:1px;background:#999;"></div>
<div class="a" style="left:1175.5px;top:688.5px;width:3px;height:8.5px;background:#555;"></div>
<div class="a" style="left:1207.2px;top:692.3px;width:5px;height:1px;background:#888;"></div><div class="a" style="left:1209.2px;top:690.3px;width:1px;height:5px;background:#888;"></div>
<span class="t" style="left:1221px;top:688.3px;font-size:7.5px;line-height:9px;color:#555;transform:scaleX(0.918);">145%</span></div>
<span class="t" style="left:1573.5px;top:83.2px;font-size:64px;line-height:80px;font-weight:bold;color:#f5893f;transform-origin:0 0;-webkit-text-stroke:1.1px #f5893f;transform:scale(1,1.007);clip-path:inset(0 0 0 14.5px);">E</span>
<span class="t" style="left:1548.7px;top:82px;font-size:64px;line-height:80px;font-weight:bold;color:#f5893f;transform-origin:0 0;-webkit-text-stroke:1.4px #f5893f;transform:scale(0.818,1.024);">S</span>
<span class="t" style="left:1618.15px;top:80.6px;font-size:64px;line-height:80px;font-weight:bold;color:#f5893f;transform-origin:0 0;-webkit-text-stroke:1.4px #f5893f;transform:scale(1.017,1.064);">C</span>
<span class="t" style="left:1675.3px;top:98.1px;font-size:20px;line-height:24px;font-weight:bold;color:#f5893f;transform-origin:0 0;font-family:'DejaVu Sans','Liberation Sans',sans-serif;-webkit-text-stroke:0.3px #f5893f;transform:scaleX(1.037);">Sales Enablement</span>
<span class="t" style="left:1675.3px;top:126.2px;font-size:20px;line-height:24px;font-weight:bold;color:#f5893f;transform-origin:0 0;font-family:'DejaVu Sans','Liberation Sans',sans-serif;-webkit-text-stroke:0.3px #f5893f;transform:scaleX(1.063);">Collective</span>
</body></html>
